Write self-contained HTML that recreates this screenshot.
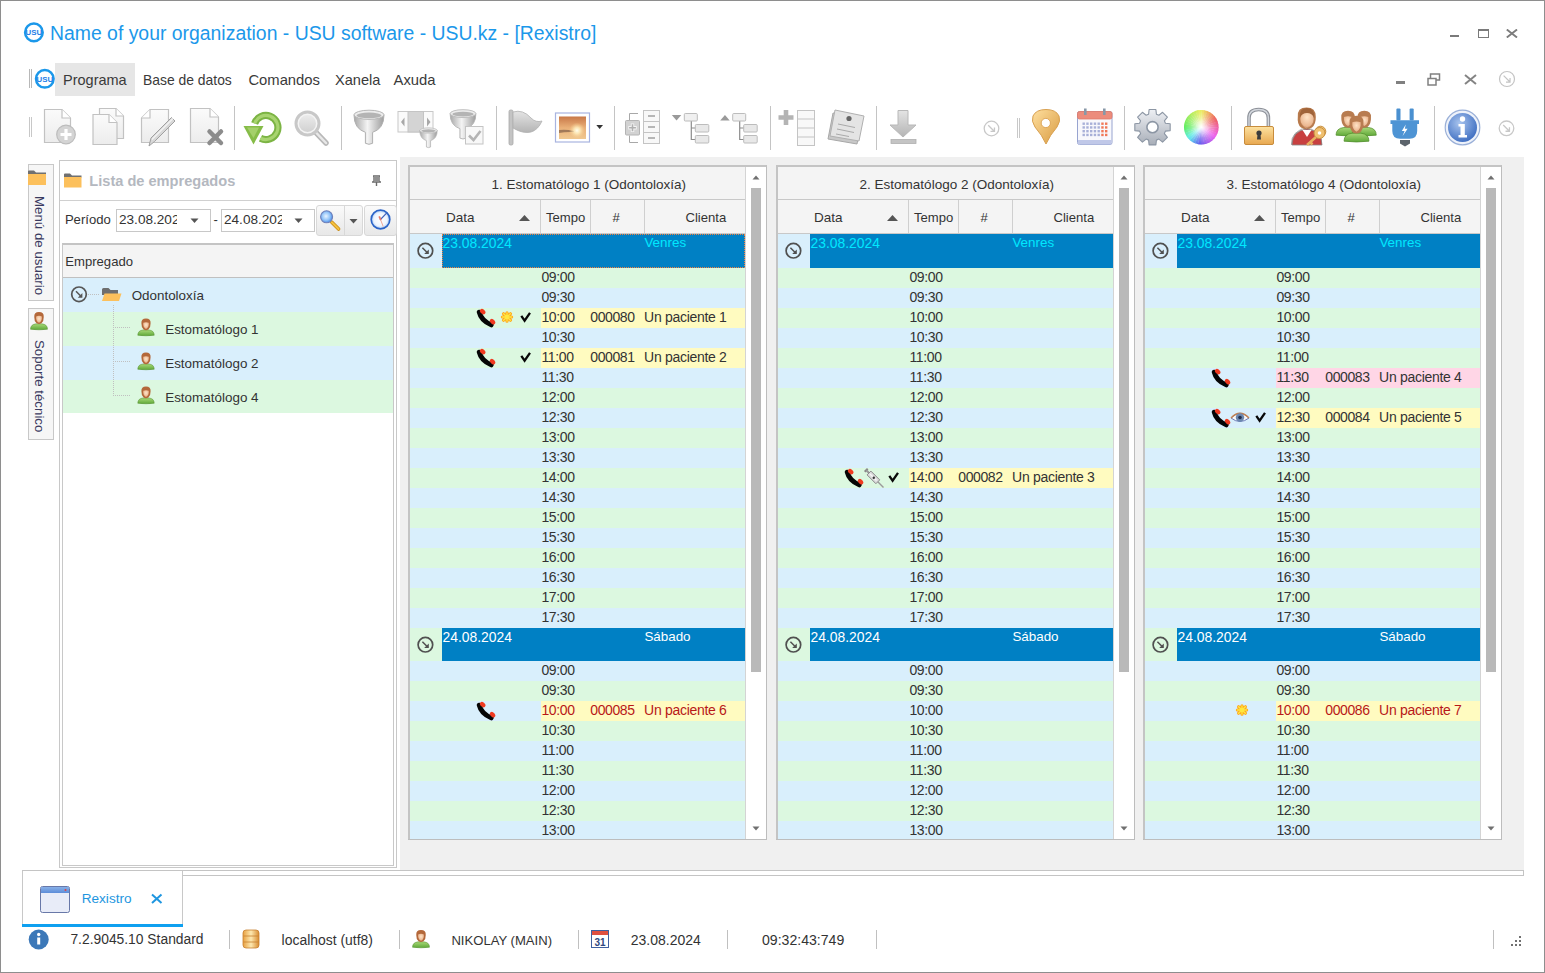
<!DOCTYPE html>
<html><head><meta charset="utf-8"><title>Rexistro</title>
<style>
html,body{margin:0;padding:0;width:1545px;height:973px;overflow:hidden;background:#fff}
body{position:relative;font-family:"Liberation Sans", sans-serif;}
svg text{font-family:"Liberation Sans",sans-serif}
</style></head><body>
<div style="position:absolute;left:0;top:0;width:1545px;height:973px;background:#fff"></div><svg style="position:absolute;left:22px;top:20px;" width="24" height="24" viewBox="0 0 24 24"><circle cx="11.9" cy="12.4" r="8.8" fill="#fff" stroke="#1b98ea" stroke-width="2.5"/><text x="3.5999999999999996" y="15.100000000000001" font-family="Liberation Sans" font-weight="bold" font-size="7.6" fill="#1e7ee8" textLength="16.6" lengthAdjust="spacingAndGlyphs">USU</text></svg><div style="position:absolute;left:50px;top:21.82px;font-size:19.4px;line-height:22.31px;color:#1b98ea;white-space:nowrap;">Name of your organization - USU software - USU.kz - [Rexistro]</div><div style="position:absolute;left:1450px;top:35px;width:9px;height:2px;background:#7a7a7a"></div><div style="position:absolute;left:1478px;top:29px;width:9px;height:6px;border:1px solid #7a7a7a;border-top-width:2px"></div><svg style="position:absolute;left:1506px;top:29px;" width="12" height="9" viewBox="0 0 12 9"><path d="M0.8 0.5 L11 8.5 M11 0.5 L0.8 8.5" stroke="#7c7c7c" stroke-width="1.9"/></svg><div style="position:absolute;left:29px;top:69px;width:1px;height:19px;background:#b8b8b8"></div><div style="position:absolute;left:31px;top:69px;width:1px;height:19px;background:#b8b8b8"></div><svg style="position:absolute;left:34px;top:68px;" width="22" height="22" viewBox="0 0 22 22"><circle cx="10.8" cy="10.8" r="8.8" fill="#fff" stroke="#1b98ea" stroke-width="2.5"/><text x="2.5" y="13.5" font-family="Liberation Sans" font-weight="bold" font-size="7.6" fill="#1e7ee8" textLength="16.6" lengthAdjust="spacingAndGlyphs">USU</text></svg><div style="position:absolute;left:55px;top:63px;width:80px;height:33px;background:#e6e6e6"></div><div style="position:absolute;left:63px;top:71.84px;font-size:14.5px;line-height:16.675px;color:#3a3a3a;white-space:nowrap;">Programa</div><div style="position:absolute;left:143px;top:72.39px;font-size:13.9px;line-height:15.985px;color:#3a3a3a;white-space:nowrap;">Base de datos</div><div style="position:absolute;left:248.4px;top:71.56px;font-size:14.8px;line-height:17.02px;color:#3a3a3a;white-space:nowrap;">Comandos</div><div style="position:absolute;left:335px;top:71.75px;font-size:14.6px;line-height:16.79px;color:#3a3a3a;white-space:nowrap;">Xanela</div><div style="position:absolute;left:393.6px;top:71.56px;font-size:14.8px;line-height:17.02px;color:#3a3a3a;white-space:nowrap;">Axuda</div><div style="position:absolute;left:1396px;top:81px;width:9px;height:3px;background:#808080"></div><svg style="position:absolute;left:1427px;top:73px;" width="14" height="13" viewBox="0 0 14 13"><rect x="3.5" y="1" width="9" height="6" fill="none" stroke="#808080" stroke-width="1.5"/><rect x="1" y="5.5" width="8" height="6.5" fill="#fff" stroke="#808080" stroke-width="1.5"/></svg><svg style="position:absolute;left:1464px;top:74px;" width="13" height="11" viewBox="0 0 13 11"><path d="M1 1 L12 10 M12 1 L1 10" stroke="#848484" stroke-width="2"/></svg><svg style="position:absolute;left:1497px;top:70px;" width="20" height="20" viewBox="0 0 20 20"><circle cx="10" cy="9" r="7.5" fill="none" stroke="#c4c4c4" stroke-width="1.2"/><path d="M6.625 5.625 L13.0375 12.0375 M13.0375 7.9875 L13.0375 12.0375 L8.9875 12.0375" fill="none" stroke="#c4c4c4" stroke-width="1.2"/></svg><svg width="0" height="0" style="position:absolute"><defs>
<linearGradient id="gdoc" x1="0" y1="0" x2="0" y2="1"><stop offset="0" stop-color="#fbfbfb"/><stop offset="1" stop-color="#ececec"/></linearGradient>
<linearGradient id="ggray" x1="0" y1="0" x2="0" y2="1"><stop offset="0" stop-color="#e4e4e4"/><stop offset="1" stop-color="#b4b4b4"/></linearGradient>
<linearGradient id="gfun" x1="0" y1="0" x2="1" y2="0"><stop offset="0" stop-color="#a8a8a8"/><stop offset="0.45" stop-color="#f4f4f4"/><stop offset="1" stop-color="#9c9c9c"/></linearGradient>
<linearGradient id="ggreen" x1="0" y1="0" x2="0" y2="1"><stop offset="0" stop-color="#b6da7a"/><stop offset="1" stop-color="#7cb23e"/></linearGradient>
<radialGradient id="gsun" cx="0.6" cy="0.65" r="0.6"><stop offset="0" stop-color="#fffbe0"/><stop offset="0.25" stop-color="#f8d488"/><stop offset="1" stop-color="#c87838"/></radialGradient>
<linearGradient id="gpin" x1="0" y1="0" x2="1" y2="1"><stop offset="0" stop-color="#ffe0a0"/><stop offset="1" stop-color="#d89a40"/></linearGradient>
<linearGradient id="ggear" x1="0" y1="0" x2="0" y2="1"><stop offset="0" stop-color="#eef0f4"/><stop offset="1" stop-color="#a8aeb8"/></linearGradient>
<linearGradient id="glock" x1="0" y1="0" x2="0" y2="1"><stop offset="0" stop-color="#fde2a0"/><stop offset="1" stop-color="#e8a850"/></linearGradient>
<radialGradient id="ginfo" cx="0.4" cy="0.35" r="0.7"><stop offset="0" stop-color="#a8c4ee"/><stop offset="1" stop-color="#3c6cc0"/></radialGradient>
<linearGradient id="gplug" x1="0" y1="0" x2="0" y2="1"><stop offset="0" stop-color="#68aee8"/><stop offset="1" stop-color="#3d86c8"/></linearGradient>
<radialGradient id="gface" cx="0.5" cy="0.4" r="0.6"><stop offset="0" stop-color="#ffe4c8"/><stop offset="1" stop-color="#e8b088"/></radialGradient>
<linearGradient id="gbody" x1="0" y1="0" x2="0" y2="1"><stop offset="0" stop-color="#a8d878"/><stop offset="1" stop-color="#5ea838"/></linearGradient>
<linearGradient id="gdb" x1="0" y1="0" x2="1" y2="0"><stop offset="0" stop-color="#e8a040"/><stop offset="0.5" stop-color="#fde8b0"/><stop offset="1" stop-color="#d88c30"/></linearGradient>
<linearGradient id="gwin" x1="0" y1="0" x2="0" y2="1"><stop offset="0" stop-color="#88b0e8"/><stop offset="1" stop-color="#5c8cd8"/></linearGradient>
<linearGradient id="gstar" x1="0" y1="0" x2="0" y2="1"><stop offset="0" stop-color="#ffe060"/><stop offset="1" stop-color="#f8b020"/></linearGradient>
</defs></svg><div style="position:absolute;left:29px;top:117px;width:1px;height:20px;background:#c8c8c8"></div><div style="position:absolute;left:31px;top:117px;width:1px;height:20px;background:#c8c8c8"></div><svg style="position:absolute;left:40px;top:104px;overflow:visible;" width="40" height="44" viewBox="40 104 40 44"><path d="M44.5 109.5 H62 L70.5 118 V142.5 H44.5 Z" fill="url(#gdoc)" stroke="#c2c2c2" stroke-width="1.2"/><path d="M62 109.5 V118 H70.5" fill="#fff" stroke="#c2c2c2" stroke-width="1.2"/><circle cx="66" cy="134.5" r="9.3" fill="#d4d4d4" stroke="#bcbcbc" stroke-width="1.2"/><path d="M66 129 V140 M60.5 134.5 H71.5" stroke="#fff" stroke-width="3.2"/></svg><svg style="position:absolute;left:88px;top:104px;overflow:visible;" width="40" height="44" viewBox="88 104 40 44"><path d="M99.5 108.5 H116 L123.5 116 V138.5 H99.5 Z" fill="url(#gdoc)" stroke="#c2c2c2" stroke-width="1.2"/><path d="M116 108.5 V116 H123.5" fill="#fff" stroke="#c2c2c2" stroke-width="1.2"/><path d="M93 114.5 H109 L117 122.5 V144.5 H93 Z" fill="url(#gdoc)" stroke="#c2c2c2" stroke-width="1.2"/><path d="M109 114.5 V122.5 H117" fill="#fff" stroke="#c2c2c2" stroke-width="1.2"/></svg><svg style="position:absolute;left:136px;top:104px;overflow:visible;" width="44" height="46" viewBox="136 104 44 46"><path d="M150 109.5 H168.5 V142.5 H141.5 V118 Z" fill="url(#gdoc)" stroke="#c2c2c2" stroke-width="1.2"/><path d="M150 109.5 V118 H141.5" fill="#fff" stroke="#c2c2c2" stroke-width="1.2"/><path d="M149 146 L151 138 L171.5 117.5 L175 121 L154.5 141.5 Z" fill="#d8d8d8" stroke="#a0a0a0" stroke-width="1"/><path d="M152 139.5 L173 118.5" stroke="#f4f4f4" stroke-width="1.2"/></svg><svg style="position:absolute;left:185px;top:104px;overflow:visible;" width="40" height="46" viewBox="185 104 40 46"><path d="M190.5 108.5 H210 L218.5 117 V142.5 H190.5 Z" fill="url(#gdoc)" stroke="#c2c2c2" stroke-width="1.2"/><path d="M210 108.5 V117 H218.5" fill="#fff" stroke="#c2c2c2" stroke-width="1.2"/><path d="M209.5 131.5 L221 143 M221 131.5 L209.5 143" stroke="#8c8c8c" stroke-width="4.5" stroke-linecap="round"/></svg><div style="position:absolute;left:234px;top:106px;width:1px;height:44px;background:#c4c4c4"></div><div style="position:absolute;left:341px;top:106px;width:1px;height:44px;background:#c4c4c4"></div><div style="position:absolute;left:496px;top:106px;width:1px;height:44px;background:#c4c4c4"></div><div style="position:absolute;left:614px;top:106px;width:1px;height:44px;background:#c4c4c4"></div><div style="position:absolute;left:770px;top:106px;width:1px;height:44px;background:#c4c4c4"></div><div style="position:absolute;left:876px;top:106px;width:1px;height:44px;background:#c4c4c4"></div><div style="position:absolute;left:1124px;top:106px;width:1px;height:44px;background:#c4c4c4"></div><div style="position:absolute;left:1231px;top:106px;width:1px;height:44px;background:#c4c4c4"></div><div style="position:absolute;left:1434px;top:106px;width:1px;height:44px;background:#c4c4c4"></div><svg style="position:absolute;left:240px;top:106px;overflow:visible;" width="46" height="42" viewBox="240 106 46 42"><path d="M254.6 123.5 A12 12 0 1 1 260.5 138.2" fill="none" stroke="#7cb444" stroke-width="7.2"/><path d="M254.6 123.5 A12 12 0 1 1 260.5 138.2" fill="none" stroke="#a8d470" stroke-width="3.2"/><path d="M243.5 126 H263.5 L253.5 144.5 Z" fill="#86bc48"/><path d="M247 127.5 H259 L253.5 138 Z" fill="#a4d06a"/></svg><svg style="position:absolute;left:290px;top:106px;overflow:visible;" width="44" height="44" viewBox="290 106 44 44"><path d="M315.5 132 L326 143" stroke="#b8b8b8" stroke-width="5.5" stroke-linecap="round"/><path d="M315.5 132 L326 143" stroke="#e8e8e8" stroke-width="2.5" stroke-linecap="round"/><circle cx="307.5" cy="123.5" r="11.5" fill="#f4f4f4" stroke="#c8c8c8" stroke-width="3"/><circle cx="307.5" cy="123.5" r="8.5" fill="url(#ggray)" opacity="0.55"/></svg><svg style="position:absolute;left:350px;top:106px;overflow:visible;" width="40" height="44" viewBox="350 106 40 44"><path d="M354.0 114.8 Q354.0 128.8 365.4 132.3 V143.3 Q369 145.3 372.6 143.3 V132.3 Q384.0 128.8 384.0 114.8 Z" fill="url(#gfun)" stroke="#b0b0b0" stroke-width="1.0"/><ellipse cx="369" cy="114.8" rx="15.0" ry="4.6" fill="#ececec" stroke="#b8b8b8" stroke-width="1.0"/><ellipse cx="369" cy="115.39999999999999" rx="12.4" ry="2.8" fill="#b4b4b4"/></svg><svg style="position:absolute;left:394px;top:106px;overflow:visible;" width="48" height="44" viewBox="394 106 48 44"><rect x="398" y="111.5" width="35" height="20.5" fill="#fafafa" stroke="#c8c8c8"/><rect x="408" y="111.5" width="15.5" height="20.5" fill="#d4d4d4" stroke="#c4c4c4"/><path d="M404.5 117.5 L401 122 L404.5 126.5 Z M427 117.5 L430.5 122 L427 126.5 Z" fill="#a8a8a8"/><path d="M419.8 130.5 Q419.8 138.62 426.412 140.65 V147.03 Q428.5 148.19 430.588 147.03 V140.65 Q437.2 138.62 437.2 130.5 Z" fill="url(#gfun)" stroke="#b0b0b0" stroke-width="0.7"/><ellipse cx="428.5" cy="130.5" rx="8.7" ry="2.6679999999999997" fill="#ececec" stroke="#b8b8b8" stroke-width="0.7"/><ellipse cx="428.5" cy="130.84799999999998" rx="7.191999999999999" ry="1.6239999999999999" fill="#b4b4b4"/></svg><svg style="position:absolute;left:445px;top:106px;overflow:visible;" width="46" height="44" viewBox="445 106 46 44"><path d="M450.1 113.6 Q450.1 125.64 459.904 128.65 V138.10999999999999 Q463 139.82999999999998 466.096 138.10999999999999 V128.65 Q475.9 125.64 475.9 113.6 Z" fill="url(#gfun)" stroke="#b0b0b0" stroke-width="0.86"/><ellipse cx="463" cy="113.6" rx="12.9" ry="3.9559999999999995" fill="#ececec" stroke="#b8b8b8" stroke-width="0.86"/><ellipse cx="463" cy="114.116" rx="10.664" ry="2.408" fill="#b4b4b4"/><rect x="465.5" y="126.5" width="17.5" height="17.5" fill="#f8f8f8" stroke="#c4c4c4"/><path d="M469 135.5 L473.5 140 L480.5 131" fill="none" stroke="#b4b4b4" stroke-width="2.6"/></svg><svg style="position:absolute;left:504px;top:106px;overflow:visible;" width="44" height="44" viewBox="504 106 44 44"><rect x="509" y="110" width="4" height="35" rx="1.5" fill="#c4c4c4" stroke="#a8a8a8" stroke-width="0.8"/><path d="M513 112 Q523 109 531 118 Q536 123 542 121 Q538 130 531 132 Q523 134 513 128 Z" fill="url(#ggray)" stroke="#b0b0b0" stroke-width="0.8"/></svg><svg style="position:absolute;left:552px;top:108px;overflow:visible;" width="52" height="38" viewBox="552 108 52 38"><linearGradient id="gsky" x1="0" y1="0" x2="0" y2="1"><stop offset="0" stop-color="#c87848"/><stop offset="0.5" stop-color="#eab078"/><stop offset="1" stop-color="#f0c890"/></linearGradient><radialGradient id="gsun2" cx="0.5" cy="0.5" r="0.5"><stop offset="0" stop-color="#fffff0" stop-opacity="1"/><stop offset="0.4" stop-color="#fff0c0" stop-opacity="0.8"/><stop offset="1" stop-color="#f8d090" stop-opacity="0"/></radialGradient><rect x="555.5" y="113" width="34" height="29" fill="#fff" stroke="#a8b4e0" stroke-width="1.2"/><rect x="559" y="116.5" width="27" height="22.5" fill="url(#gsky)"/><path d="M559 130 Q566 129 574 131 L574 132 Q566 131.5 559 133 Z" fill="#705040" opacity="0.6"/><circle cx="577" cy="130.5" r="8" fill="url(#gsun2)"/><path d="M596.3 125 H603 L599.65 129 Z" fill="#333"/></svg><svg style="position:absolute;left:620px;top:106px;overflow:visible;" width="44" height="44" viewBox="620 106 44 44"><path d="M638 113.5 H629.5 V120 M629.5 135.5 V142.5 H638" fill="none" stroke="#a8a8a8" stroke-width="1"/><rect x="625.5" y="120.5" width="14" height="14.5" rx="1" fill="#d2d2d2" stroke="#b4b4b4"/><path d="M632.5 123.5 V132 M628.3 127.75 H636.7" stroke="#f4f4f4" stroke-width="3.4"/><path d="M632.5 124.3 V131.2 M629.1 127.75 H635.9" stroke="#b0b0b0" stroke-width="1.6"/><rect x="643.5" y="110.5" width="16" height="11" fill="#f8f8f8" stroke="#c4c4c4"/><rect x="643.5" y="121.5" width="16" height="11" fill="#f8f8f8" stroke="#c4c4c4"/><rect x="643.5" y="132.5" width="16" height="11" fill="#f8f8f8" stroke="#c4c4c4"/><path d="M648 116 H655 M648 127 H655 M648 138 H655" stroke="#a0a0a0" stroke-width="1.6"/></svg><svg style="position:absolute;left:668px;top:106px;overflow:visible;" width="44" height="44" viewBox="668 106 44 44"><path d="M671.8 115 H681.3 L676.55 120.5 Z" fill="#9a9a9a"/><path d="M691.3 120.5 V139.5 H695.8 M691.3 128 H695.8" fill="none" stroke="#8c8c8c" stroke-width="1.2"/><rect x="684.3" y="113.5" width="13" height="7.5" rx="1" fill="#f0f0f0" stroke="#bcbcbc"/><rect x="695.3" y="124.5" width="13.5" height="7.5" rx="1" fill="#e8e8e8" stroke="#bcbcbc"/><rect x="695.3" y="135.5" width="13.5" height="7.5" rx="1" fill="#e8e8e8" stroke="#bcbcbc"/></svg><svg style="position:absolute;left:717px;top:106px;overflow:visible;" width="44" height="44" viewBox="717 106 44 44"><path d="M720.2 120.5 L724.95 115 L729.7 120.5 Z" fill="#9a9a9a"/><path d="M739.7 120.5 V139.5 H744.2 M739.7 128 H744.2" fill="none" stroke="#8c8c8c" stroke-width="1.2"/><rect x="732.7" y="113.5" width="13" height="7.5" rx="1" fill="#f0f0f0" stroke="#bcbcbc"/><rect x="743.7" y="124.5" width="13.5" height="7.5" rx="1" fill="#e8e8e8" stroke="#bcbcbc"/><rect x="743.7" y="135.5" width="13.5" height="7.5" rx="1" fill="#e8e8e8" stroke="#bcbcbc"/></svg><svg style="position:absolute;left:774px;top:106px;overflow:visible;" width="44" height="44" viewBox="774 106 44 44"><path d="M786 110 V125 M778.5 117.5 H793.5" stroke="#b4b4b4" stroke-width="4.6"/><rect x="797.5" y="110.5" width="17" height="35" fill="#f8f8f8" stroke="#c4c4c4"/><path d="M798 119 H814 M798 128 H814 M798 137 H814" stroke="#c4c4c4" stroke-width="1"/></svg><svg style="position:absolute;left:824px;top:106px;overflow:visible;" width="44" height="44" viewBox="824 106 44 44"><path d="M833 113 L862 118 L857 144 L828 139 Z" fill="#c8c8c8" stroke="#a8a8a8" stroke-width="1"/><path d="M835 110 L864 116 L859 141 L830 136 Z" fill="#e4e4e4" stroke="#b0b0b0" stroke-width="1"/><path d="M838 124 L855 127.5 M837 129 L854 132.5 M836 134 L849 136.5" stroke="#aaa" stroke-width="1"/><circle cx="849" cy="118.5" r="2.6" fill="#666"/></svg><svg style="position:absolute;left:886px;top:106px;overflow:visible;" width="36" height="44" viewBox="886 106 36 44"><path d="M898 110.5 H908 V125 H916 L903 137 L890 125 H898 Z" fill="url(#ggray)" stroke="#b8b8b8" stroke-width="1"/><rect x="891" y="139.5" width="25" height="4" fill="#c4c4c4" stroke="#b0b0b0" stroke-width="0.8"/></svg><svg style="position:absolute;left:981px;top:118px;overflow:visible;" width="22" height="22" viewBox="981 118 22 22"><circle cx="991.5" cy="128.5" r="7.3" fill="none" stroke="#c8c8c8" stroke-width="1.3"/><path d="M988.215 125.215 L994.4565 131.4565 M994.4565 127.5145 L994.4565 131.4565 L990.5145 131.4565" fill="none" stroke="#c8c8c8" stroke-width="1.3"/></svg><div style="position:absolute;left:1017px;top:118px;width:1px;height:20px;background:#c8c8c8"></div><div style="position:absolute;left:1019px;top:118px;width:1px;height:20px;background:#c8c8c8"></div><svg style="position:absolute;left:1028px;top:106px;overflow:visible;" width="38" height="44" viewBox="1028 106 38 44"><path d="M1046 144 Q1042 135 1035 127 Q1031 121 1033 116 Q1036 109.5 1046 109.5 Q1056 109.5 1059 116 Q1061 121 1057 127 Q1050 135 1046 144 Z" fill="url(#gpin)" stroke="#d8a050" stroke-width="1"/><circle cx="1045.8" cy="123" r="4.6" fill="#fff" stroke="#d89a48" stroke-width="0.8"/></svg><svg style="position:absolute;left:1074px;top:106px;overflow:visible;" width="42" height="44" viewBox="1074 106 42 44"><rect x="1077.5" y="111.5" width="34.5" height="33" rx="2" fill="#f8f8fc" stroke="#98a4d0" stroke-width="1"/><rect x="1077.5" y="111.5" width="34.5" height="7.5" rx="2" fill="#ec8c7c" stroke="#e07868" stroke-width="0.8"/><rect x="1078" y="140" width="33.5" height="4.5" fill="#c0c8e8"/><rect x="1084" y="108.5" width="2.6" height="6.5" fill="#8898a8"/><rect x="1103" y="108.5" width="2.6" height="6.5" fill="#8898a8"/><rect x="1082.50" y="122.50" width="2.4" height="2.4" fill="#a8b0d8"/><rect x="1086.25" y="122.50" width="2.4" height="2.4" fill="#a8b0d8"/><rect x="1090.00" y="122.50" width="2.4" height="2.4" fill="#a8b0d8"/><rect x="1093.75" y="122.50" width="2.4" height="2.4" fill="#a8b0d8"/><rect x="1097.50" y="122.50" width="2.4" height="2.4" fill="#a8b0d8"/><rect x="1101.25" y="122.50" width="2.4" height="2.4" fill="#f07858"/><rect x="1105.00" y="122.50" width="2.4" height="2.4" fill="#f07858"/><rect x="1082.50" y="126.25" width="2.4" height="2.4" fill="#a8b0d8"/><rect x="1086.25" y="126.25" width="2.4" height="2.4" fill="#a8b0d8"/><rect x="1090.00" y="126.25" width="2.4" height="2.4" fill="#a8b0d8"/><rect x="1093.75" y="126.25" width="2.4" height="2.4" fill="#a8b0d8"/><rect x="1097.50" y="126.25" width="2.4" height="2.4" fill="#a8b0d8"/><rect x="1101.25" y="126.25" width="2.4" height="2.4" fill="#f07858"/><rect x="1105.00" y="126.25" width="2.4" height="2.4" fill="#f07858"/><rect x="1082.50" y="130.00" width="2.4" height="2.4" fill="#a8b0d8"/><rect x="1086.25" y="130.00" width="2.4" height="2.4" fill="#a8b0d8"/><rect x="1090.00" y="130.00" width="2.4" height="2.4" fill="#a8b0d8"/><rect x="1093.75" y="130.00" width="2.4" height="2.4" fill="#a8b0d8"/><rect x="1097.50" y="130.00" width="2.4" height="2.4" fill="#a8b0d8"/><rect x="1101.25" y="130.00" width="2.4" height="2.4" fill="#f07858"/><rect x="1105.00" y="130.00" width="2.4" height="2.4" fill="#f07858"/><rect x="1082.50" y="133.75" width="2.4" height="2.4" fill="#a8b0d8"/><rect x="1086.25" y="133.75" width="2.4" height="2.4" fill="#a8b0d8"/><rect x="1090.00" y="133.75" width="2.4" height="2.4" fill="#a8b0d8"/><rect x="1093.75" y="133.75" width="2.4" height="2.4" fill="#a8b0d8"/><rect x="1097.50" y="133.75" width="2.4" height="2.4" fill="#a8b0d8"/><rect x="1101.25" y="133.75" width="2.4" height="2.4" fill="#f07858"/><rect x="1105.00" y="133.75" width="2.4" height="2.4" fill="#f07858"/></svg><svg style="position:absolute;left:1128px;top:104px;overflow:visible;" width="48" height="48" viewBox="1128 104 48 48"><path d="M1165.42 123.29 L1170.18 123.80 L1170.18 130.60 L1165.42 131.11 L1164.40 133.57 L1167.40 137.29 L1162.59 142.10 L1158.87 139.10 L1156.41 140.12 L1155.90 144.88 L1149.10 144.88 L1148.59 140.12 L1146.13 139.10 L1142.41 142.10 L1137.60 137.29 L1140.60 133.57 L1139.58 131.11 L1134.82 130.60 L1134.82 123.80 L1139.58 123.29 L1140.60 120.83 L1137.60 117.11 L1142.41 112.30 L1146.13 115.30 L1148.59 114.28 L1149.10 109.52 L1155.90 109.52 L1156.41 114.28 L1158.87 115.30 L1162.59 112.30 L1167.40 117.11 L1164.40 120.83 Z" fill="url(#ggear)" stroke="#8c96a4" stroke-width="1.1" stroke-linejoin="round"/><circle cx="1152.5" cy="127.2" r="5.6" fill="#fff" stroke="#8c96a4" stroke-width="1.6"/></svg><svg style="position:absolute;left:1180px;top:106px;overflow:visible;" width="44" height="44" viewBox="1180 106 44 44"><path d="M1201.3 127.2 L1201.30 109.90 A17.3 17.3 0 0 1 1204.75 110.25 Z" fill="hsl(55,80%,64%)"/><path d="M1201.3 127.2 L1204.30 110.16 A17.3 17.3 0 0 1 1207.64 111.10 Z" fill="hsl(45,80%,64%)"/><path d="M1201.3 127.2 L1207.22 110.94 A17.3 17.3 0 0 1 1210.34 112.45 Z" fill="hsl(35,80%,64%)"/><path d="M1201.3 127.2 L1209.95 112.22 A17.3 17.3 0 0 1 1212.76 114.24 Z" fill="hsl(25,80%,64%)"/><path d="M1201.3 127.2 L1212.42 113.95 A17.3 17.3 0 0 1 1214.84 116.43 Z" fill="hsl(15,80%,64%)"/><path d="M1201.3 127.2 L1214.55 116.08 A17.3 17.3 0 0 1 1216.50 118.95 Z" fill="hsl(5,80%,64%)"/><path d="M1201.3 127.2 L1216.28 118.55 A17.3 17.3 0 0 1 1217.71 121.71 Z" fill="hsl(355,80%,64%)"/><path d="M1201.3 127.2 L1217.56 121.28 A17.3 17.3 0 0 1 1218.41 124.64 Z" fill="hsl(345,80%,64%)"/><path d="M1201.3 127.2 L1218.34 124.20 A17.3 17.3 0 0 1 1218.59 127.65 Z" fill="hsl(335,80%,64%)"/><path d="M1201.3 127.2 L1218.60 127.20 A17.3 17.3 0 0 1 1218.25 130.65 Z" fill="hsl(326,80%,64%)"/><path d="M1201.3 127.2 L1218.34 130.20 A17.3 17.3 0 0 1 1217.40 133.54 Z" fill="hsl(317,80%,64%)"/><path d="M1201.3 127.2 L1217.56 133.12 A17.3 17.3 0 0 1 1216.05 136.24 Z" fill="hsl(308,80%,64%)"/><path d="M1201.3 127.2 L1216.28 135.85 A17.3 17.3 0 0 1 1214.26 138.66 Z" fill="hsl(299,80%,64%)"/><path d="M1201.3 127.2 L1214.55 138.32 A17.3 17.3 0 0 1 1212.07 140.74 Z" fill="hsl(290,80%,64%)"/><path d="M1201.3 127.2 L1212.42 140.45 A17.3 17.3 0 0 1 1209.55 142.40 Z" fill="hsl(281,80%,64%)"/><path d="M1201.3 127.2 L1209.95 142.18 A17.3 17.3 0 0 1 1206.79 143.61 Z" fill="hsl(272,80%,64%)"/><path d="M1201.3 127.2 L1207.22 143.46 A17.3 17.3 0 0 1 1203.86 144.31 Z" fill="hsl(263,80%,64%)"/><path d="M1201.3 127.2 L1204.30 144.24 A17.3 17.3 0 0 1 1200.85 144.49 Z" fill="hsl(254,80%,64%)"/><path d="M1201.3 127.2 L1201.30 144.50 A17.3 17.3 0 0 1 1197.85 144.15 Z" fill="hsl(243,80%,64%)"/><path d="M1201.3 127.2 L1198.30 144.24 A17.3 17.3 0 0 1 1194.96 143.30 Z" fill="hsl(228,80%,64%)"/><path d="M1201.3 127.2 L1195.38 143.46 A17.3 17.3 0 0 1 1192.26 141.95 Z" fill="hsl(214,80%,64%)"/><path d="M1201.3 127.2 L1192.65 142.18 A17.3 17.3 0 0 1 1189.84 140.16 Z" fill="hsl(199,80%,64%)"/><path d="M1201.3 127.2 L1190.18 140.45 A17.3 17.3 0 0 1 1187.76 137.97 Z" fill="hsl(185,80%,64%)"/><path d="M1201.3 127.2 L1188.05 138.32 A17.3 17.3 0 0 1 1186.10 135.45 Z" fill="hsl(171,80%,64%)"/><path d="M1201.3 127.2 L1186.32 135.85 A17.3 17.3 0 0 1 1184.89 132.69 Z" fill="hsl(156,80%,64%)"/><path d="M1201.3 127.2 L1185.04 133.12 A17.3 17.3 0 0 1 1184.19 129.76 Z" fill="hsl(142,80%,64%)"/><path d="M1201.3 127.2 L1184.26 130.20 A17.3 17.3 0 0 1 1184.01 126.75 Z" fill="hsl(127,80%,64%)"/><path d="M1201.3 127.2 L1184.00 127.20 A17.3 17.3 0 0 1 1184.35 123.75 Z" fill="hsl(117,80%,64%)"/><path d="M1201.3 127.2 L1184.26 124.20 A17.3 17.3 0 0 1 1185.20 120.86 Z" fill="hsl(110,80%,64%)"/><path d="M1201.3 127.2 L1185.04 121.28 A17.3 17.3 0 0 1 1186.55 118.16 Z" fill="hsl(103,80%,64%)"/><path d="M1201.3 127.2 L1186.32 118.55 A17.3 17.3 0 0 1 1188.34 115.74 Z" fill="hsl(97,80%,64%)"/><path d="M1201.3 127.2 L1188.05 116.08 A17.3 17.3 0 0 1 1190.53 113.66 Z" fill="hsl(90,80%,64%)"/><path d="M1201.3 127.2 L1190.18 113.95 A17.3 17.3 0 0 1 1193.05 112.00 Z" fill="hsl(83,80%,64%)"/><path d="M1201.3 127.2 L1192.65 112.22 A17.3 17.3 0 0 1 1195.81 110.79 Z" fill="hsl(77,80%,64%)"/><path d="M1201.3 127.2 L1195.38 110.94 A17.3 17.3 0 0 1 1198.74 110.09 Z" fill="hsl(70,80%,64%)"/><path d="M1201.3 127.2 L1198.30 110.16 A17.3 17.3 0 0 1 1201.75 109.91 Z" fill="hsl(63,80%,64%)"/><radialGradient id="gcw" cx="0.5" cy="0.5" r="0.5"><stop offset="0" stop-color="#fff" stop-opacity="1"/><stop offset="0.6" stop-color="#fff" stop-opacity="0.3"/><stop offset="1" stop-color="#fff" stop-opacity="0"/></radialGradient><circle cx="1201.3" cy="127.2" r="17.3" fill="url(#gcw)"/></svg><svg style="position:absolute;left:1240px;top:104px;overflow:visible;" width="38" height="46" viewBox="1240 104 38 46"><path d="M1249 127 V118 Q1249 109.5 1258.7 109.5 Q1268.4 109.5 1268.4 118 V127" fill="none" stroke="#8c9098" stroke-width="3.6"/><path d="M1249 127 V118 Q1249 109.5 1258.7 109.5 Q1268.4 109.5 1268.4 118 V127" fill="none" stroke="#d4d8de" stroke-width="1.4"/><rect x="1244.5" y="126.5" width="29" height="18" rx="1.5" fill="url(#glock)" stroke="#c88c3c" stroke-width="1"/><circle cx="1259" cy="133" r="2.6" fill="#3c3c3c"/><path d="M1257.6 134 H1260.4 L1261 139.5 H1257 Z" fill="#3c3c3c"/></svg><svg style="position:absolute;left:1286px;top:104px;overflow:visible;" width="44" height="46" viewBox="1286 104 44 46"><path d="M1291.5 144.5 Q1291 131 1306.5 128 Q1322 131 1321.5 144.5 Z" fill="#f0f0f0" stroke="#909090" stroke-width="0.8"/><path d="M1296 144.5 Q1296 132 1306.5 129.5 Q1317 132 1317 144.5 Z" fill="#c84444"/><path d="M1301 129 L1306.5 137 L1312 129 Z" fill="#fff" stroke="#b0b0b0" stroke-width="0.6"/><path d="M1297.8 117 Q1297 107.6 1306.5 107.6 Q1316 107.6 1315.8 117 Q1316 124 1312 127.5 Q1306.5 131 1301 127.5 Q1297 124 1297.8 117 Z" fill="#b87a4c"/><path d="M1300.5 117.5 Q1306.5 113 1312.5 117.5 Q1313 125 1306.5 128.5 Q1300 125 1300.5 117.5 Z" fill="url(#gface)"/><circle cx="1320.5" cy="131.5" r="5.3" fill="#f0c070" stroke="#c89040" stroke-width="1"/><circle cx="1320.5" cy="131.5" r="1.7" fill="#e0a050"/><path d="M1317.5 135.5 L1308.5 144.5 M1311.5 141.5 L1313.8 143.8" stroke="#e8b060" stroke-width="2.8"/></svg><svg style="position:absolute;left:1286px;top:104px;overflow:visible;" width="44" height="46" viewBox="1286 104 44 46"><path d="M1292 145 Q1292 131 1307 129 Q1322 131 1322 145 Z" fill="#c84040" stroke="#888" stroke-width="0.8"/><path d="M1302.5 130 L1307 137 L1311.5 130 Z" fill="#fff"/><ellipse cx="1307" cy="119" rx="7" ry="8.5" fill="url(#gface)" stroke="#b87a50" stroke-width="0.6"/><path d="M1299.8 118 Q1299 108 1307 108 Q1315 108 1314.2 118 Q1312 113 1307 113 Q1302 113 1299.8 118 Z" fill="#a0643a"/><circle cx="1319.5" cy="133" r="5.5" fill="#f0c070" stroke="#c89040" stroke-width="1"/><circle cx="1319.5" cy="133" r="1.8" fill="#fff"/><path d="M1316 137 L1307 145 M1310 142 L1312.5 144.5" stroke="#e8b060" stroke-width="2.6"/></svg><svg style="position:absolute;left:1333px;top:104px;overflow:visible;" width="46" height="46" viewBox="1333 104 46 46"><path d="M1336.0288 135.16 Q1336.0288 128.3392 1343.824 127.50399999999999 H1352.176 Q1359.9712 128.3392 1359.9712 135.16 Q1348 136.6912 1336.0288 135.16 Z" fill="url(#gbody)" stroke="#4e8a28" stroke-width="0.696"/><path d="M1341.3184 117.75999999999999 Q1340.7616 110.8 1348 110.8 Q1355.2384 110.8 1354.6816 117.75999999999999 Q1354.96 123.328 1351.48 126.80799999999999 Q1348 128.61759999999998 1344.52 126.80799999999999 Q1341.04 123.328 1341.3184 117.75999999999999 Z" fill="#b87c50"/><path d="M1343.9632 117.064 Q1348 115.2544 1352.0368 117.064 Q1352.4544 124.024 1348 126.112 Q1343.5456 124.024 1343.9632 117.064 Z" fill="url(#gface)"/><path d="M1352.3288 135.16 Q1352.3288 128.3392 1360.124 127.50399999999999 H1368.4759999999999 Q1376.2712 128.3392 1376.2712 135.16 Q1364.3 136.6912 1352.3288 135.16 Z" fill="url(#gbody)" stroke="#4e8a28" stroke-width="0.696"/><path d="M1357.6184 117.75999999999999 Q1357.0616 110.8 1364.3 110.8 Q1371.5384 110.8 1370.9815999999998 117.75999999999999 Q1371.26 123.328 1367.78 126.80799999999999 Q1364.3 128.61759999999998 1360.82 126.80799999999999 Q1357.34 123.328 1357.6184 117.75999999999999 Z" fill="#b87c50"/><path d="M1360.2631999999999 117.064 Q1364.3 115.2544 1368.3368 117.064 Q1368.7544 124.024 1364.3 126.112 Q1359.8455999999999 124.024 1360.2631999999999 117.064 Z" fill="url(#gface)"/><path d="M1344.03 141.175 Q1344.03 134.07 1352.15 133.2 H1360.85 Q1368.97 134.07 1368.97 141.175 Q1356.5 142.77 1344.03 141.175 Z" fill="url(#gbody)" stroke="#4e8a28" stroke-width="0.725"/><path d="M1349.54 123.05 Q1348.96 115.8 1356.5 115.8 Q1364.04 115.8 1363.46 123.05 Q1363.75 128.85 1360.125 132.475 Q1356.5 134.35999999999999 1352.875 132.475 Q1349.25 128.85 1349.54 123.05 Z" fill="#b87c50"/><path d="M1352.295 122.325 Q1356.5 120.44 1360.705 122.325 Q1361.14 129.575 1356.5 131.75 Q1351.86 129.575 1352.295 122.325 Z" fill="url(#gface)"/></svg><svg style="position:absolute;left:1388px;top:104px;overflow:visible;" width="34" height="48" viewBox="1388 104 34 48"><rect x="1396.4" y="108.5" width="4.1" height="12" rx="1" fill="#4a90d0"/><rect x="1409.6" y="108.5" width="4.1" height="12" rx="1" fill="#4a90d0"/><path d="M1390.5 120.3 H1419 V124 H1417.2 V131 Q1417.2 138.8 1409.5 138.8 H1400.2 Q1392.3 138.8 1392.3 131 V124 H1390.5 Z" fill="#4e94d4"/><path d="M1405.8 124.5 L1401.8 131 H1404.6 L1402.6 136 L1407.6 128.8 H1404.8 Z" fill="#fff"/><path d="M1400 140 H1410 V143.5 L1405 146.5 L1400 143.5 Z" fill="#5c646c"/></svg><svg style="position:absolute;left:1440px;top:104px;overflow:visible;" width="46" height="46" viewBox="1440 104 46 46"><circle cx="1462.5" cy="127.5" r="17.3" fill="#eef2fa" stroke="#9ab0d8" stroke-width="1.2"/><circle cx="1462.5" cy="127.5" r="14.5" fill="url(#ginfo)"/><circle cx="1462.5" cy="119" r="2.7" fill="#fff"/><path d="M1458.5 124 H1464.8 V135 H1467 V137.5 H1458.5 V135 H1460.5 V126.5 H1458.5 Z" fill="#fff"/></svg><svg style="position:absolute;left:1496px;top:118px;overflow:visible;" width="22" height="22" viewBox="1496 118 22 22"><circle cx="1506.5" cy="128.3" r="7.3" fill="none" stroke="#c8c8c8" stroke-width="1.3"/><path d="M1503.215 125.01500000000001 L1509.4565 131.25650000000002 M1509.4565 127.31450000000001 L1509.4565 131.25650000000002 L1505.5145 131.25650000000002" fill="none" stroke="#c8c8c8" stroke-width="1.3"/></svg><div style="position:absolute;left:28px;top:164px;width:24px;height:135px;border:1px solid #c8c8c8;background:#f6f6f6"></div><svg style="position:absolute;left:27px;top:168px;overflow:visible;" width="22" height="20" viewBox="27 168 22 20"><path d="M28 173.5 V171.5 Q28 170.5 29 170.5 H34 L36 172.5 H46 V174.5 H28 Z" fill="#707070"/><rect x="28" y="174.0" width="18" height="11.0" fill="#fcc05c"/></svg><div style="position:absolute;left:33px;top:196px;width:14px;height:104px;"><div style="position:absolute;left:0;top:0;transform-origin:0 0;transform:translate(13px,0) rotate(90deg);font-size:13.3px;line-height:13px;color:#3a3a60;white-space:nowrap">Menú de usuario</div></div><div style="position:absolute;left:28px;top:308px;width:24px;height:130px;border:1px solid #c8c8c8;background:#f6f6f6"></div><svg style="position:absolute;left:27px;top:310px;overflow:visible;" width="24" height="24" viewBox="27 310 24 24"><path d="M30.520400000000002 329.255 Q30.520400000000002 324.4236 36.042 323.832 H41.958 Q47.4796 324.4236 47.4796 329.255 Q39 330.3396 30.520400000000002 329.255 Z" fill="url(#gbody)" stroke="#4e8a28" stroke-width="0.493"/><path d="M34.2672 316.93 Q33.8728 312 39 312 Q44.1272 312 43.7328 316.93 Q43.93 320.874 41.465 323.339 Q39 324.6208 36.535 323.339 Q34.07 320.874 34.2672 316.93 Z" fill="#b4683a"/><path d="M36.1406 316.437 Q39 315.1552 41.8594 316.437 Q42.1552 321.367 39 322.846 Q35.8448 321.367 36.1406 316.437 Z" fill="url(#gface)"/></svg><div style="position:absolute;left:33px;top:340px;width:14px;height:96px;"><div style="position:absolute;left:0;top:0;transform-origin:0 0;transform:translate(13px,0) rotate(90deg);font-size:13.3px;line-height:13px;color:#3a3a60;white-space:nowrap">Soporte técnico</div></div><div style="position:absolute;left:59px;top:160px;width:336px;height:706px;border:1px solid #c8c8c8;background:#fff"></div><div style="position:absolute;left:60px;top:200px;width:336px;height:1px;background:#d0d0d0"></div><svg style="position:absolute;left:62px;top:170px;overflow:visible;" width="22" height="20" viewBox="62 170 22 20"><path d="M64 176.5 V174.5 Q64 173.5 65 173.5 H70 L72 175.5 H81.5 V177.5 H64 Z" fill="#707070"/><rect x="64" y="177.0" width="17.5" height="10.5" fill="#fcc05c"/></svg><div style="position:absolute;left:89.3px;top:173.05px;font-size:14.6px;line-height:16.79px;color:#b4b8c0;white-space:nowrap;font-weight:bold">Lista de empregados</div><svg style="position:absolute;left:368px;top:172px;overflow:visible;" width="16" height="16" viewBox="368 172 16 16"><path d="M373 176 H380 M374 176 V182 M379 176 V182 M372 182 H381 M376.5 182 V186" stroke="#6a6a6a" stroke-width="1.4" fill="none"/><rect x="374" y="176" width="5" height="6" fill="#909090"/></svg><div style="position:absolute;left:64.9px;top:212.43px;font-size:13.1px;line-height:15.065px;color:#333;white-space:nowrap;">Período</div><div style="position:absolute;left:116px;top:209px;width:95px;height:23px;border:1px solid #c8c8c8;background:#fff;box-sizing:border-box"></div><div style="position:absolute;left:119px;top:212px;width:58px;height:16px;overflow:hidden;font-size:13.6px;line-height:16px;color:#333;white-space:nowrap;letter-spacing:0px">23.08.202</div><svg style="position:absolute;left:189px;top:215px;overflow:visible;" width="12" height="10" viewBox="189 215 12 10"><path d="M190.5 218.5 H198.5 L194.5 223 Z" fill="#555"/></svg><div style="position:absolute;left:221px;top:209px;width:94px;height:23px;border:1px solid #c8c8c8;background:#fff;box-sizing:border-box"></div><div style="position:absolute;left:224px;top:212px;width:58px;height:16px;overflow:hidden;font-size:13.6px;line-height:16px;color:#333;white-space:nowrap;letter-spacing:0px">24.08.202</div><svg style="position:absolute;left:293px;top:215px;overflow:visible;" width="12" height="10" viewBox="293 215 12 10"><path d="M294.5 218.5 H302.5 L298.5 223 Z" fill="#555"/></svg><div style="position:absolute;left:213.5px;top:213.02px;font-size:13px;line-height:14.95px;color:#333;white-space:nowrap;">-</div><div style="position:absolute;left:316px;top:205px;width:47px;height:31px;border:1px solid #d8d8d8;border-radius:3px;background:linear-gradient(#fafafa,#e8e8e8);box-sizing:border-box"></div><div style="position:absolute;left:344px;top:206px;width:1px;height:29px;background:#d8d8d8"></div><svg style="position:absolute;left:318px;top:206px;overflow:visible;" width="26" height="28" viewBox="318 206 26 28"><radialGradient id="gglass" cx="0.45" cy="0.45" r="0.6"><stop offset="0" stop-color="#e8f4ff"/><stop offset="0.6" stop-color="#8cc0f8"/><stop offset="1" stop-color="#3c7ce0"/></radialGradient><path d="M331.8 222.2 L338.6 229" stroke="#c88a10" stroke-width="3.6" stroke-linecap="round"/><path d="M331.8 222.2 L338.6 229" stroke="#f4c040" stroke-width="2" stroke-linecap="round"/><circle cx="326.6" cy="216.8" r="6" fill="url(#gglass)" stroke="#7080b8" stroke-width="1.1"/></svg><svg style="position:absolute;left:346px;top:214px;overflow:visible;" width="14" height="12" viewBox="346 214 14 12"><path d="M349.5 219 H357.5 L353.5 223.5 Z" fill="#555"/></svg><div style="position:absolute;left:364px;top:205px;width:33px;height:31px;border:1px solid #d8d8d8;border-radius:3px;background:linear-gradient(#fafafa,#e8e8e8);box-sizing:border-box"></div><svg style="position:absolute;left:366px;top:207px;overflow:visible;" width="28" height="28" viewBox="366 207 28 28"><radialGradient id="gclock" cx="0.5" cy="0.5" r="0.5"><stop offset="0" stop-color="#ffffff"/><stop offset="0.7" stop-color="#eef5ff"/><stop offset="1" stop-color="#a8c8f0"/></radialGradient><circle cx="380.5" cy="219.5" r="9.3" fill="url(#gclock)" stroke="#2c64c8" stroke-width="1.7"/><path d="M380 220 L386.8 212.8" stroke="#4060b8" stroke-width="1.1"/><path d="M380.5 219.5 L383.2 226.5" stroke="#f0a898" stroke-width="1"/><path d="M380.8 220 L379.2 216.3" stroke="#e87868" stroke-width="1.8"/></svg><div style="position:absolute;left:62px;top:243px;width:332px;height:623px;border:1px solid #c8c8c8;border-top:2px solid #c4c4c4;box-sizing:border-box;background:#fff"></div><div style="position:absolute;left:63px;top:245px;width:330px;height:32px;background:#f4f4f4;border-bottom:1px solid #c0c0c0"></div><div style="position:absolute;left:65.3px;top:253.93px;font-size:13.1px;line-height:15.065px;color:#333;white-space:nowrap;">Empregado</div><div style="position:absolute;left:63px;top:278px;width:330px;height:34px;background:#d9effc"></div><div style="position:absolute;left:63px;top:312px;width:330px;height:34px;background:#dcf8e0"></div><div style="position:absolute;left:63px;top:346px;width:330px;height:34px;background:#d9effc"></div><div style="position:absolute;left:63px;top:380px;width:330px;height:33px;background:#dcf8e0"></div><svg style="position:absolute;left:68px;top:284px;overflow:visible;" width="24" height="20" viewBox="68 284 24 20"><circle cx="79" cy="294.3" r="7.3" fill="none" stroke="#555" stroke-width="1.7"/><path d="M76 291.3 L80.5 295.8" stroke="#555" stroke-width="1.5"/><path d="M82.4 293.1 V297.7 H77.8 Z" fill="#555"/></svg><svg style="position:absolute;left:0;top:0" width="200" height="400"><rect x="113" y="305" width="1" height="1" fill="#c0c0c0"/><rect x="113" y="307" width="1" height="1" fill="#c0c0c0"/><rect x="113" y="309" width="1" height="1" fill="#c0c0c0"/><rect x="113" y="311" width="1" height="1" fill="#c0c0c0"/><rect x="113" y="313" width="1" height="1" fill="#c0c0c0"/><rect x="113" y="315" width="1" height="1" fill="#c0c0c0"/><rect x="113" y="317" width="1" height="1" fill="#c0c0c0"/><rect x="113" y="319" width="1" height="1" fill="#c0c0c0"/><rect x="113" y="321" width="1" height="1" fill="#c0c0c0"/><rect x="113" y="323" width="1" height="1" fill="#c0c0c0"/><rect x="113" y="325" width="1" height="1" fill="#c0c0c0"/><rect x="113" y="327" width="1" height="1" fill="#c0c0c0"/><rect x="113" y="329" width="1" height="1" fill="#c0c0c0"/><rect x="113" y="331" width="1" height="1" fill="#c0c0c0"/><rect x="113" y="333" width="1" height="1" fill="#c0c0c0"/><rect x="113" y="335" width="1" height="1" fill="#c0c0c0"/><rect x="113" y="337" width="1" height="1" fill="#c0c0c0"/><rect x="113" y="339" width="1" height="1" fill="#c0c0c0"/><rect x="113" y="341" width="1" height="1" fill="#c0c0c0"/><rect x="113" y="343" width="1" height="1" fill="#c0c0c0"/><rect x="113" y="345" width="1" height="1" fill="#c0c0c0"/><rect x="113" y="347" width="1" height="1" fill="#c0c0c0"/><rect x="113" y="349" width="1" height="1" fill="#c0c0c0"/><rect x="113" y="351" width="1" height="1" fill="#c0c0c0"/><rect x="113" y="353" width="1" height="1" fill="#c0c0c0"/><rect x="113" y="355" width="1" height="1" fill="#c0c0c0"/><rect x="113" y="357" width="1" height="1" fill="#c0c0c0"/><rect x="113" y="359" width="1" height="1" fill="#c0c0c0"/><rect x="113" y="361" width="1" height="1" fill="#c0c0c0"/><rect x="113" y="363" width="1" height="1" fill="#c0c0c0"/><rect x="113" y="365" width="1" height="1" fill="#c0c0c0"/><rect x="113" y="367" width="1" height="1" fill="#c0c0c0"/><rect x="113" y="369" width="1" height="1" fill="#c0c0c0"/><rect x="113" y="371" width="1" height="1" fill="#c0c0c0"/><rect x="113" y="373" width="1" height="1" fill="#c0c0c0"/><rect x="113" y="375" width="1" height="1" fill="#c0c0c0"/><rect x="113" y="377" width="1" height="1" fill="#c0c0c0"/><rect x="113" y="379" width="1" height="1" fill="#c0c0c0"/><rect x="113" y="381" width="1" height="1" fill="#c0c0c0"/><rect x="113" y="383" width="1" height="1" fill="#c0c0c0"/><rect x="113" y="385" width="1" height="1" fill="#c0c0c0"/><rect x="113" y="387" width="1" height="1" fill="#c0c0c0"/><rect x="113" y="389" width="1" height="1" fill="#c0c0c0"/><rect x="113" y="391" width="1" height="1" fill="#c0c0c0"/><rect x="113" y="393" width="1" height="1" fill="#c0c0c0"/><rect x="113" y="395" width="1" height="1" fill="#c0c0c0"/><rect x="115" y="327" width="1" height="1" fill="#c0c0c0"/><rect x="117" y="327" width="1" height="1" fill="#c0c0c0"/><rect x="119" y="327" width="1" height="1" fill="#c0c0c0"/><rect x="121" y="327" width="1" height="1" fill="#c0c0c0"/><rect x="123" y="327" width="1" height="1" fill="#c0c0c0"/><rect x="125" y="327" width="1" height="1" fill="#c0c0c0"/><rect x="127" y="327" width="1" height="1" fill="#c0c0c0"/><rect x="129" y="327" width="1" height="1" fill="#c0c0c0"/><rect x="115" y="361" width="1" height="1" fill="#c0c0c0"/><rect x="117" y="361" width="1" height="1" fill="#c0c0c0"/><rect x="119" y="361" width="1" height="1" fill="#c0c0c0"/><rect x="121" y="361" width="1" height="1" fill="#c0c0c0"/><rect x="123" y="361" width="1" height="1" fill="#c0c0c0"/><rect x="125" y="361" width="1" height="1" fill="#c0c0c0"/><rect x="127" y="361" width="1" height="1" fill="#c0c0c0"/><rect x="129" y="361" width="1" height="1" fill="#c0c0c0"/><rect x="115" y="395" width="1" height="1" fill="#c0c0c0"/><rect x="117" y="395" width="1" height="1" fill="#c0c0c0"/><rect x="119" y="395" width="1" height="1" fill="#c0c0c0"/><rect x="121" y="395" width="1" height="1" fill="#c0c0c0"/><rect x="123" y="395" width="1" height="1" fill="#c0c0c0"/><rect x="125" y="395" width="1" height="1" fill="#c0c0c0"/><rect x="127" y="395" width="1" height="1" fill="#c0c0c0"/><rect x="129" y="395" width="1" height="1" fill="#c0c0c0"/><rect x="88" y="294" width="1" height="1" fill="#c0c0c0"/><rect x="90" y="294" width="1" height="1" fill="#c0c0c0"/><rect x="92" y="294" width="1" height="1" fill="#c0c0c0"/><rect x="94" y="294" width="1" height="1" fill="#c0c0c0"/><rect x="96" y="294" width="1" height="1" fill="#c0c0c0"/><rect x="98" y="294" width="1" height="1" fill="#c0c0c0"/></svg><svg style="position:absolute;left:100px;top:284px;overflow:visible;" width="26" height="20" viewBox="100 284 26 20"><path d="M102 289.5 Q102 288 103.5 288 H108.5 L110.5 290 H118 V295 H102 Z" fill="#6e6e6e"/><path d="M102 301 L104.5 293.5 H121.5 L119 301 Z" fill="#fcc05c"/></svg><div style="position:absolute;left:131.7px;top:288.15px;font-size:13.4px;line-height:15.41px;color:#333;white-space:nowrap;">Odontoloxía</div><svg style="position:absolute;left:134px;top:316px;overflow:visible;" width="24" height="24" viewBox="134 316 24 24"><path d="M137.7698 335.2475 Q137.7698 330.5582 143.129 329.984 H148.871 Q154.2302 330.5582 154.2302 335.2475 Q146 336.3002 137.7698 335.2475 Z" fill="url(#gbody)" stroke="#4e8a28" stroke-width="0.4785"/><path d="M141.4064 323.285 Q141.0236 318.5 146 318.5 Q150.9764 318.5 150.5936 323.285 Q150.785 327.113 148.3925 329.5055 Q146 330.7496 143.6075 329.5055 Q141.215 327.113 141.4064 323.285 Z" fill="#b4683a"/><path d="M143.2247 322.8065 Q146 321.5624 148.7753 322.8065 Q149.0624 327.5915 146 329.027 Q142.9376 327.5915 143.2247 322.8065 Z" fill="url(#gface)"/></svg><div style="position:absolute;left:165.2px;top:321.61px;font-size:13.45px;line-height:15.467px;color:#333;white-space:nowrap;">Estomatólogo 1</div><svg style="position:absolute;left:134px;top:350px;overflow:visible;" width="24" height="24" viewBox="134 350 24 24"><path d="M137.7698 369.2475 Q137.7698 364.5582 143.129 363.984 H148.871 Q154.2302 364.5582 154.2302 369.2475 Q146 370.3002 137.7698 369.2475 Z" fill="url(#gbody)" stroke="#4e8a28" stroke-width="0.4785"/><path d="M141.4064 357.285 Q141.0236 352.5 146 352.5 Q150.9764 352.5 150.5936 357.285 Q150.785 361.113 148.3925 363.5055 Q146 364.7496 143.6075 363.5055 Q141.215 361.113 141.4064 357.285 Z" fill="#b4683a"/><path d="M143.2247 356.8065 Q146 355.5624 148.7753 356.8065 Q149.0624 361.5915 146 363.027 Q142.9376 361.5915 143.2247 356.8065 Z" fill="url(#gface)"/></svg><div style="position:absolute;left:165.2px;top:355.61px;font-size:13.45px;line-height:15.467px;color:#333;white-space:nowrap;">Estomatólogo 2</div><svg style="position:absolute;left:134px;top:384px;overflow:visible;" width="24" height="24" viewBox="134 384 24 24"><path d="M137.7698 403.2475 Q137.7698 398.5582 143.129 397.984 H148.871 Q154.2302 398.5582 154.2302 403.2475 Q146 404.3002 137.7698 403.2475 Z" fill="url(#gbody)" stroke="#4e8a28" stroke-width="0.4785"/><path d="M141.4064 391.285 Q141.0236 386.5 146 386.5 Q150.9764 386.5 150.5936 391.285 Q150.785 395.113 148.3925 397.5055 Q146 398.7496 143.6075 397.5055 Q141.215 395.113 141.4064 391.285 Z" fill="#b4683a"/><path d="M143.2247 390.8065 Q146 389.5624 148.7753 390.8065 Q149.0624 395.5915 146 397.027 Q142.9376 395.5915 143.2247 390.8065 Z" fill="url(#gface)"/></svg><div style="position:absolute;left:165.2px;top:389.61px;font-size:13.45px;line-height:15.467px;color:#333;white-space:nowrap;">Estomatólogo 4</div><div style="position:absolute;left:400px;top:157px;width:1124px;height:713px;background:#f0f0f0"></div><div style="position:absolute;left:408px;top:165px;width:359px;height:675px;background:#fff;border:1px solid #bdbdbd;border-top:2px solid #c4c4c4;border-left:2px solid #c4c4c4;box-sizing:border-box"></div><div style="position:absolute;left:410px;top:167px;width:335px;height:32px;background:#f4f4f4"></div><div style="position:absolute;left:410px;top:199px;width:335px;height:1px;background:#c8c8c8"></div><div style="position:absolute;left:491.6px;top:176.56px;font-size:13.5px;line-height:15.525px;color:#333;white-space:nowrap;">1. Estomatólogo 1 (Odontoloxía)</div><div style="position:absolute;left:410px;top:200px;width:335px;height:33px;background:#f4f4f4"></div><div style="position:absolute;left:410px;top:233px;width:335px;height:1px;background:#c8c8c8"></div><div style="position:absolute;left:540px;top:200px;width:1px;height:33px;background:#cfcfcf"></div><div style="position:absolute;left:590px;top:200px;width:1px;height:33px;background:#cfcfcf"></div><div style="position:absolute;left:644px;top:200px;width:1px;height:33px;background:#cfcfcf"></div><div style="position:absolute;left:446px;top:209.56px;font-size:13.5px;line-height:15.525px;color:#333;white-space:nowrap;">Data</div><svg style="position:absolute;left:516px;top:212px;overflow:visible;" width="14" height="10" viewBox="516 212 14 10"><path d="M519 221 H530 L524.5 215 Z" fill="#555"/></svg><div style="position:absolute;left:546px;top:209.93px;font-size:13.1px;line-height:15.065px;color:#333;white-space:nowrap;">Tempo</div><div style="position:absolute;left:612.5px;top:209.93px;font-size:13.1px;line-height:15.065px;color:#333;white-space:nowrap;">#</div><div style="position:absolute;left:685.5px;top:209.93px;font-size:13.1px;line-height:15.065px;color:#333;white-space:nowrap;">Clienta</div><div style="position:absolute;left:745px;top:167px;width:1px;height:672px;background:#d4d4d4"></div><div style="position:absolute;left:746px;top:167px;width:20px;height:672px;background:#fff"></div><svg style="position:absolute;left:750px;top:172px;overflow:visible;" width="14" height="10" viewBox="750 172 14 10"><path d="M752.5 179.5 H759.5 L756 175.5 Z" fill="#707070"/></svg><div style="position:absolute;left:751px;top:188px;width:10px;height:484px;background:#b9b9b9"></div><svg style="position:absolute;left:750px;top:824px;overflow:visible;" width="14" height="10" viewBox="750 824 14 10"><path d="M752.5 826.5 H759.5 L756 830.5 Z" fill="#707070"/></svg><div style="position:absolute;left:410px;top:234px;width:335px;height:34px;background:#d9effc"></div><svg style="position:absolute;left:416px;top:241px;overflow:visible;" width="20" height="20" viewBox="416 241 20 20"><circle cx="425.4" cy="250.7" r="7.3" fill="none" stroke="#505050" stroke-width="1.7"/><path d="M422.4 247.7 L426.9 252.2" stroke="#505050" stroke-width="1.5"/><path d="M428.79999999999995 249.5 V254.1 H424.2 Z" fill="#505050"/></svg><div style="position:absolute;left:442px;top:234px;width:303px;height:34px;background:#0080c4;outline:1px dotted #f08040;outline-offset:-1px;"></div><div style="position:absolute;left:442.5px;top:234.89px;font-size:13.9px;line-height:15.985px;color:#00e8ff;white-space:nowrap;">23.08.2024</div><div style="position:absolute;left:644.4px;top:235.35px;font-size:13.4px;line-height:15.41px;color:#00e8ff;white-space:nowrap;">Venres</div><div style="position:absolute;left:410px;top:268px;width:335px;height:20px;background:#dcf8e0"></div><div style="position:absolute;left:541.4px;top:268.7px;font-size:14px;line-height:16.1px;color:#333;white-space:nowrap;letter-spacing:-0.35px">09:00</div><div style="position:absolute;left:410px;top:288px;width:335px;height:20px;background:#d9effc"></div><div style="position:absolute;left:541.4px;top:288.7px;font-size:14px;line-height:16.1px;color:#333;white-space:nowrap;letter-spacing:-0.35px">09:30</div><div style="position:absolute;left:410px;top:308px;width:335px;height:20px;background:#dcf8e0"></div><div style="position:absolute;left:541px;top:308px;width:204px;height:20px;background:#fffbc0"></div><div style="position:absolute;left:541.4px;top:308.7px;font-size:14px;line-height:16.1px;color:#333;white-space:nowrap;letter-spacing:-0.35px">10:00</div><div style="position:absolute;left:590.3px;top:308.7px;font-size:14px;line-height:16.1px;color:#333;white-space:nowrap;letter-spacing:-0.42px">000080</div><div style="position:absolute;left:644.1px;top:308.7px;font-size:14px;line-height:16.1px;color:#333;white-space:nowrap;letter-spacing:-0.3px">Un paciente 1</div><svg style="position:absolute;left:448px;top:306px;overflow:visible;" width="95" height="24" viewBox="448 306 95 24"><path d="M479.3 312.2 Q481.2 320.5 491.2 324.8" fill="none" stroke="#050505" stroke-width="5" stroke-linecap="round"/><ellipse cx="482.7" cy="311.6" rx="2.2" ry="3.1" transform="rotate(-48 482.7 311.6)" fill="#f03a20"/><ellipse cx="492.6" cy="321.6" rx="2.2" ry="3.2" transform="rotate(-40 492.6 321.6)" fill="#f03a20"/><path d="M502.4 317 H511.6 M507 312.8 V321.2 M503.6 313.8 L510.4 320.2 M510.4 313.8 L503.6 320.2" stroke="#ffa820" stroke-width="3.2" stroke-linecap="round"/><path d="M502.4 317 H511.6 M507 312.8 V321.2 M503.6 313.8 L510.4 320.2 M510.4 313.8 L503.6 320.2" stroke="#ffe840" stroke-width="1.3" stroke-linecap="round"/><path d="M521.3 315.8 L524.6 320.6 L530 312.8" fill="none" stroke="#080808" stroke-width="2.3" stroke-linejoin="miter"/></svg><div style="position:absolute;left:410px;top:328px;width:335px;height:20px;background:#d9effc"></div><div style="position:absolute;left:541.4px;top:328.7px;font-size:14px;line-height:16.1px;color:#333;white-space:nowrap;letter-spacing:-0.35px">10:30</div><div style="position:absolute;left:410px;top:348px;width:335px;height:20px;background:#dcf8e0"></div><div style="position:absolute;left:541px;top:348px;width:204px;height:20px;background:#fffbc0"></div><div style="position:absolute;left:541.4px;top:348.7px;font-size:14px;line-height:16.1px;color:#333;white-space:nowrap;letter-spacing:-0.35px">11:00</div><div style="position:absolute;left:590.3px;top:348.7px;font-size:14px;line-height:16.1px;color:#333;white-space:nowrap;letter-spacing:-0.42px">000081</div><div style="position:absolute;left:644.1px;top:348.7px;font-size:14px;line-height:16.1px;color:#333;white-space:nowrap;letter-spacing:-0.3px">Un paciente 2</div><svg style="position:absolute;left:448px;top:346px;overflow:visible;" width="95" height="24" viewBox="448 346 95 24"><path d="M479.3 352.2 Q481.2 360.5 491.2 364.8" fill="none" stroke="#050505" stroke-width="5" stroke-linecap="round"/><ellipse cx="482.7" cy="351.6" rx="2.2" ry="3.1" transform="rotate(-48 482.7 351.6)" fill="#f03a20"/><ellipse cx="492.6" cy="361.6" rx="2.2" ry="3.2" transform="rotate(-40 492.6 361.6)" fill="#f03a20"/><path d="M521.3 355.8 L524.6 360.6 L530 352.8" fill="none" stroke="#080808" stroke-width="2.3" stroke-linejoin="miter"/></svg><div style="position:absolute;left:410px;top:368px;width:335px;height:20px;background:#d9effc"></div><div style="position:absolute;left:541.4px;top:368.7px;font-size:14px;line-height:16.1px;color:#333;white-space:nowrap;letter-spacing:-0.35px">11:30</div><div style="position:absolute;left:410px;top:388px;width:335px;height:20px;background:#dcf8e0"></div><div style="position:absolute;left:541.4px;top:388.7px;font-size:14px;line-height:16.1px;color:#333;white-space:nowrap;letter-spacing:-0.35px">12:00</div><div style="position:absolute;left:410px;top:408px;width:335px;height:20px;background:#d9effc"></div><div style="position:absolute;left:541.4px;top:408.7px;font-size:14px;line-height:16.1px;color:#333;white-space:nowrap;letter-spacing:-0.35px">12:30</div><div style="position:absolute;left:410px;top:428px;width:335px;height:20px;background:#dcf8e0"></div><div style="position:absolute;left:541.4px;top:428.7px;font-size:14px;line-height:16.1px;color:#333;white-space:nowrap;letter-spacing:-0.35px">13:00</div><div style="position:absolute;left:410px;top:448px;width:335px;height:20px;background:#d9effc"></div><div style="position:absolute;left:541.4px;top:448.7px;font-size:14px;line-height:16.1px;color:#333;white-space:nowrap;letter-spacing:-0.35px">13:30</div><div style="position:absolute;left:410px;top:468px;width:335px;height:20px;background:#dcf8e0"></div><div style="position:absolute;left:541.4px;top:468.7px;font-size:14px;line-height:16.1px;color:#333;white-space:nowrap;letter-spacing:-0.35px">14:00</div><div style="position:absolute;left:410px;top:488px;width:335px;height:20px;background:#d9effc"></div><div style="position:absolute;left:541.4px;top:488.7px;font-size:14px;line-height:16.1px;color:#333;white-space:nowrap;letter-spacing:-0.35px">14:30</div><div style="position:absolute;left:410px;top:508px;width:335px;height:20px;background:#dcf8e0"></div><div style="position:absolute;left:541.4px;top:508.7px;font-size:14px;line-height:16.1px;color:#333;white-space:nowrap;letter-spacing:-0.35px">15:00</div><div style="position:absolute;left:410px;top:528px;width:335px;height:20px;background:#d9effc"></div><div style="position:absolute;left:541.4px;top:528.7px;font-size:14px;line-height:16.1px;color:#333;white-space:nowrap;letter-spacing:-0.35px">15:30</div><div style="position:absolute;left:410px;top:548px;width:335px;height:20px;background:#dcf8e0"></div><div style="position:absolute;left:541.4px;top:548.7px;font-size:14px;line-height:16.1px;color:#333;white-space:nowrap;letter-spacing:-0.35px">16:00</div><div style="position:absolute;left:410px;top:568px;width:335px;height:20px;background:#d9effc"></div><div style="position:absolute;left:541.4px;top:568.7px;font-size:14px;line-height:16.1px;color:#333;white-space:nowrap;letter-spacing:-0.35px">16:30</div><div style="position:absolute;left:410px;top:588px;width:335px;height:20px;background:#dcf8e0"></div><div style="position:absolute;left:541.4px;top:588.7px;font-size:14px;line-height:16.1px;color:#333;white-space:nowrap;letter-spacing:-0.35px">17:00</div><div style="position:absolute;left:410px;top:608px;width:335px;height:20px;background:#d9effc"></div><div style="position:absolute;left:541.4px;top:608.7px;font-size:14px;line-height:16.1px;color:#333;white-space:nowrap;letter-spacing:-0.35px">17:30</div><div style="position:absolute;left:410px;top:628px;width:335px;height:33px;background:#dcf8e0"></div><svg style="position:absolute;left:416px;top:635px;overflow:visible;" width="20" height="20" viewBox="416 635 20 20"><circle cx="425.4" cy="644.7" r="7.3" fill="none" stroke="#505050" stroke-width="1.7"/><path d="M422.4 641.7 L426.9 646.2" stroke="#505050" stroke-width="1.5"/><path d="M428.79999999999995 643.5 V648.1 H424.2 Z" fill="#505050"/></svg><div style="position:absolute;left:442px;top:628px;width:303px;height:33px;background:#0080c4;"></div><div style="position:absolute;left:442.5px;top:628.89px;font-size:13.9px;line-height:15.985px;color:#ffffff;white-space:nowrap;">24.08.2024</div><div style="position:absolute;left:644.4px;top:629.35px;font-size:13.4px;line-height:15.41px;color:#ffffff;white-space:nowrap;">Sábado</div><div style="position:absolute;left:410px;top:661px;width:335px;height:20px;background:#d9effc"></div><div style="position:absolute;left:541.4px;top:661.7px;font-size:14px;line-height:16.1px;color:#333;white-space:nowrap;letter-spacing:-0.35px">09:00</div><div style="position:absolute;left:410px;top:681px;width:335px;height:20px;background:#dcf8e0"></div><div style="position:absolute;left:541.4px;top:681.7px;font-size:14px;line-height:16.1px;color:#333;white-space:nowrap;letter-spacing:-0.35px">09:30</div><div style="position:absolute;left:410px;top:701px;width:335px;height:20px;background:#d9effc"></div><div style="position:absolute;left:541px;top:701px;width:204px;height:20px;background:#fffbc0"></div><div style="position:absolute;left:541.4px;top:701.7px;font-size:14px;line-height:16.1px;color:#b81818;white-space:nowrap;letter-spacing:-0.35px">10:00</div><div style="position:absolute;left:590.3px;top:701.7px;font-size:14px;line-height:16.1px;color:#b81818;white-space:nowrap;letter-spacing:-0.42px">000085</div><div style="position:absolute;left:644.1px;top:701.7px;font-size:14px;line-height:16.1px;color:#b81818;white-space:nowrap;letter-spacing:-0.3px">Un paciente 6</div><svg style="position:absolute;left:448px;top:699px;overflow:visible;" width="95" height="24" viewBox="448 699 95 24"><path d="M479.3 705.2 Q481.2 713.5 491.2 717.8" fill="none" stroke="#050505" stroke-width="5" stroke-linecap="round"/><ellipse cx="482.7" cy="704.6" rx="2.2" ry="3.1" transform="rotate(-48 482.7 704.6)" fill="#f03a20"/><ellipse cx="492.6" cy="714.6" rx="2.2" ry="3.2" transform="rotate(-40 492.6 714.6)" fill="#f03a20"/></svg><div style="position:absolute;left:410px;top:721px;width:335px;height:20px;background:#dcf8e0"></div><div style="position:absolute;left:541.4px;top:721.7px;font-size:14px;line-height:16.1px;color:#333;white-space:nowrap;letter-spacing:-0.35px">10:30</div><div style="position:absolute;left:410px;top:741px;width:335px;height:20px;background:#d9effc"></div><div style="position:absolute;left:541.4px;top:741.7px;font-size:14px;line-height:16.1px;color:#333;white-space:nowrap;letter-spacing:-0.35px">11:00</div><div style="position:absolute;left:410px;top:761px;width:335px;height:20px;background:#dcf8e0"></div><div style="position:absolute;left:541.4px;top:761.7px;font-size:14px;line-height:16.1px;color:#333;white-space:nowrap;letter-spacing:-0.35px">11:30</div><div style="position:absolute;left:410px;top:781px;width:335px;height:20px;background:#d9effc"></div><div style="position:absolute;left:541.4px;top:781.7px;font-size:14px;line-height:16.1px;color:#333;white-space:nowrap;letter-spacing:-0.35px">12:00</div><div style="position:absolute;left:410px;top:801px;width:335px;height:20px;background:#dcf8e0"></div><div style="position:absolute;left:541.4px;top:801.7px;font-size:14px;line-height:16.1px;color:#333;white-space:nowrap;letter-spacing:-0.35px">12:30</div><div style="position:absolute;left:410px;top:821px;width:335px;height:20px;background:#d9effc"></div><div style="position:absolute;left:541.4px;top:821.7px;font-size:14px;line-height:16.1px;color:#333;white-space:nowrap;letter-spacing:-0.35px">13:00</div><div style="position:absolute;left:407px;top:840px;width:361px;height:4px;background:#f0f0f0"></div><div style="position:absolute;left:408px;top:839px;width:359px;height:1px;background:#bdbdbd"></div><div style="position:absolute;left:776px;top:165px;width:359px;height:675px;background:#fff;border:1px solid #bdbdbd;border-top:2px solid #c4c4c4;border-left:2px solid #c4c4c4;box-sizing:border-box"></div><div style="position:absolute;left:778px;top:167px;width:335px;height:32px;background:#f4f4f4"></div><div style="position:absolute;left:778px;top:199px;width:335px;height:1px;background:#c8c8c8"></div><div style="position:absolute;left:859.6px;top:176.56px;font-size:13.5px;line-height:15.525px;color:#333;white-space:nowrap;">2. Estomatólogo 2 (Odontoloxía)</div><div style="position:absolute;left:778px;top:200px;width:335px;height:33px;background:#f4f4f4"></div><div style="position:absolute;left:778px;top:233px;width:335px;height:1px;background:#c8c8c8"></div><div style="position:absolute;left:908px;top:200px;width:1px;height:33px;background:#cfcfcf"></div><div style="position:absolute;left:958px;top:200px;width:1px;height:33px;background:#cfcfcf"></div><div style="position:absolute;left:1012px;top:200px;width:1px;height:33px;background:#cfcfcf"></div><div style="position:absolute;left:814px;top:209.56px;font-size:13.5px;line-height:15.525px;color:#333;white-space:nowrap;">Data</div><svg style="position:absolute;left:884px;top:212px;overflow:visible;" width="14" height="10" viewBox="884 212 14 10"><path d="M887 221 H898 L892.5 215 Z" fill="#555"/></svg><div style="position:absolute;left:914px;top:209.93px;font-size:13.1px;line-height:15.065px;color:#333;white-space:nowrap;">Tempo</div><div style="position:absolute;left:980.5px;top:209.93px;font-size:13.1px;line-height:15.065px;color:#333;white-space:nowrap;">#</div><div style="position:absolute;left:1053.5px;top:209.93px;font-size:13.1px;line-height:15.065px;color:#333;white-space:nowrap;">Clienta</div><div style="position:absolute;left:1113px;top:167px;width:1px;height:672px;background:#d4d4d4"></div><div style="position:absolute;left:1114px;top:167px;width:20px;height:672px;background:#fff"></div><svg style="position:absolute;left:1118px;top:172px;overflow:visible;" width="14" height="10" viewBox="1118 172 14 10"><path d="M1120.5 179.5 H1127.5 L1124 175.5 Z" fill="#707070"/></svg><div style="position:absolute;left:1119px;top:188px;width:10px;height:484px;background:#b9b9b9"></div><svg style="position:absolute;left:1118px;top:824px;overflow:visible;" width="14" height="10" viewBox="1118 824 14 10"><path d="M1120.5 826.5 H1127.5 L1124 830.5 Z" fill="#707070"/></svg><div style="position:absolute;left:778px;top:234px;width:335px;height:34px;background:#d9effc"></div><svg style="position:absolute;left:784px;top:241px;overflow:visible;" width="20" height="20" viewBox="784 241 20 20"><circle cx="793.4" cy="250.7" r="7.3" fill="none" stroke="#505050" stroke-width="1.7"/><path d="M790.4 247.7 L794.9 252.2" stroke="#505050" stroke-width="1.5"/><path d="M796.8 249.5 V254.1 H792.1999999999999 Z" fill="#505050"/></svg><div style="position:absolute;left:810px;top:234px;width:303px;height:34px;background:#0080c4;"></div><div style="position:absolute;left:810.5px;top:234.89px;font-size:13.9px;line-height:15.985px;color:#00e8ff;white-space:nowrap;">23.08.2024</div><div style="position:absolute;left:1012.4px;top:235.35px;font-size:13.4px;line-height:15.41px;color:#00e8ff;white-space:nowrap;">Venres</div><div style="position:absolute;left:778px;top:268px;width:335px;height:20px;background:#dcf8e0"></div><div style="position:absolute;left:909.4px;top:268.7px;font-size:14px;line-height:16.1px;color:#333;white-space:nowrap;letter-spacing:-0.35px">09:00</div><div style="position:absolute;left:778px;top:288px;width:335px;height:20px;background:#d9effc"></div><div style="position:absolute;left:909.4px;top:288.7px;font-size:14px;line-height:16.1px;color:#333;white-space:nowrap;letter-spacing:-0.35px">09:30</div><div style="position:absolute;left:778px;top:308px;width:335px;height:20px;background:#dcf8e0"></div><div style="position:absolute;left:909.4px;top:308.7px;font-size:14px;line-height:16.1px;color:#333;white-space:nowrap;letter-spacing:-0.35px">10:00</div><div style="position:absolute;left:778px;top:328px;width:335px;height:20px;background:#d9effc"></div><div style="position:absolute;left:909.4px;top:328.7px;font-size:14px;line-height:16.1px;color:#333;white-space:nowrap;letter-spacing:-0.35px">10:30</div><div style="position:absolute;left:778px;top:348px;width:335px;height:20px;background:#dcf8e0"></div><div style="position:absolute;left:909.4px;top:348.7px;font-size:14px;line-height:16.1px;color:#333;white-space:nowrap;letter-spacing:-0.35px">11:00</div><div style="position:absolute;left:778px;top:368px;width:335px;height:20px;background:#d9effc"></div><div style="position:absolute;left:909.4px;top:368.7px;font-size:14px;line-height:16.1px;color:#333;white-space:nowrap;letter-spacing:-0.35px">11:30</div><div style="position:absolute;left:778px;top:388px;width:335px;height:20px;background:#dcf8e0"></div><div style="position:absolute;left:909.4px;top:388.7px;font-size:14px;line-height:16.1px;color:#333;white-space:nowrap;letter-spacing:-0.35px">12:00</div><div style="position:absolute;left:778px;top:408px;width:335px;height:20px;background:#d9effc"></div><div style="position:absolute;left:909.4px;top:408.7px;font-size:14px;line-height:16.1px;color:#333;white-space:nowrap;letter-spacing:-0.35px">12:30</div><div style="position:absolute;left:778px;top:428px;width:335px;height:20px;background:#dcf8e0"></div><div style="position:absolute;left:909.4px;top:428.7px;font-size:14px;line-height:16.1px;color:#333;white-space:nowrap;letter-spacing:-0.35px">13:00</div><div style="position:absolute;left:778px;top:448px;width:335px;height:20px;background:#d9effc"></div><div style="position:absolute;left:909.4px;top:448.7px;font-size:14px;line-height:16.1px;color:#333;white-space:nowrap;letter-spacing:-0.35px">13:30</div><div style="position:absolute;left:778px;top:468px;width:335px;height:20px;background:#dcf8e0"></div><div style="position:absolute;left:909px;top:468px;width:204px;height:20px;background:#fffbc0"></div><div style="position:absolute;left:909.4px;top:468.7px;font-size:14px;line-height:16.1px;color:#333;white-space:nowrap;letter-spacing:-0.35px">14:00</div><div style="position:absolute;left:958.3px;top:468.7px;font-size:14px;line-height:16.1px;color:#333;white-space:nowrap;letter-spacing:-0.42px">000082</div><div style="position:absolute;left:1012.1px;top:468.7px;font-size:14px;line-height:16.1px;color:#333;white-space:nowrap;letter-spacing:-0.3px">Un paciente 3</div><svg style="position:absolute;left:816px;top:466px;overflow:visible;" width="95" height="24" viewBox="816 466 95 24"><path d="M847.3 472.2 Q849.2 480.5 859.2 484.8" fill="none" stroke="#050505" stroke-width="5" stroke-linecap="round"/><ellipse cx="850.7" cy="471.6" rx="2.2" ry="3.1" transform="rotate(-48 850.7 471.6)" fill="#f03a20"/><ellipse cx="860.6" cy="481.6" rx="2.2" ry="3.2" transform="rotate(-40 860.6 481.6)" fill="#f03a20"/><path d="M864.7 471.7 L867.7 468.7" stroke="#888" stroke-width="2"/><path d="M866.3 470.3 L869.5 473.5" stroke="#999" stroke-width="2"/><path d="M867.1 474.9 L870.9 471.1 L879.7 479.9 L875.9 483.7 Z" fill="#dcdcdc" stroke="#8a8a8a" stroke-width="1"/><path d="M870.0 474.0 L876.5 480.5" stroke="#f8f8f8" stroke-width="1.2"/><circle cx="873.8" cy="477.8" r="1.2" fill="#333"/><path d="M877.8 481.8 L883.5 487.5" stroke="#9a9a9a" stroke-width="1.4"/><path d="M889.3 475.8 L892.6 480.6 L898 472.8" fill="none" stroke="#080808" stroke-width="2.3" stroke-linejoin="miter"/></svg><div style="position:absolute;left:778px;top:488px;width:335px;height:20px;background:#d9effc"></div><div style="position:absolute;left:909.4px;top:488.7px;font-size:14px;line-height:16.1px;color:#333;white-space:nowrap;letter-spacing:-0.35px">14:30</div><div style="position:absolute;left:778px;top:508px;width:335px;height:20px;background:#dcf8e0"></div><div style="position:absolute;left:909.4px;top:508.7px;font-size:14px;line-height:16.1px;color:#333;white-space:nowrap;letter-spacing:-0.35px">15:00</div><div style="position:absolute;left:778px;top:528px;width:335px;height:20px;background:#d9effc"></div><div style="position:absolute;left:909.4px;top:528.7px;font-size:14px;line-height:16.1px;color:#333;white-space:nowrap;letter-spacing:-0.35px">15:30</div><div style="position:absolute;left:778px;top:548px;width:335px;height:20px;background:#dcf8e0"></div><div style="position:absolute;left:909.4px;top:548.7px;font-size:14px;line-height:16.1px;color:#333;white-space:nowrap;letter-spacing:-0.35px">16:00</div><div style="position:absolute;left:778px;top:568px;width:335px;height:20px;background:#d9effc"></div><div style="position:absolute;left:909.4px;top:568.7px;font-size:14px;line-height:16.1px;color:#333;white-space:nowrap;letter-spacing:-0.35px">16:30</div><div style="position:absolute;left:778px;top:588px;width:335px;height:20px;background:#dcf8e0"></div><div style="position:absolute;left:909.4px;top:588.7px;font-size:14px;line-height:16.1px;color:#333;white-space:nowrap;letter-spacing:-0.35px">17:00</div><div style="position:absolute;left:778px;top:608px;width:335px;height:20px;background:#d9effc"></div><div style="position:absolute;left:909.4px;top:608.7px;font-size:14px;line-height:16.1px;color:#333;white-space:nowrap;letter-spacing:-0.35px">17:30</div><div style="position:absolute;left:778px;top:628px;width:335px;height:33px;background:#dcf8e0"></div><svg style="position:absolute;left:784px;top:635px;overflow:visible;" width="20" height="20" viewBox="784 635 20 20"><circle cx="793.4" cy="644.7" r="7.3" fill="none" stroke="#505050" stroke-width="1.7"/><path d="M790.4 641.7 L794.9 646.2" stroke="#505050" stroke-width="1.5"/><path d="M796.8 643.5 V648.1 H792.1999999999999 Z" fill="#505050"/></svg><div style="position:absolute;left:810px;top:628px;width:303px;height:33px;background:#0080c4;"></div><div style="position:absolute;left:810.5px;top:628.89px;font-size:13.9px;line-height:15.985px;color:#ffffff;white-space:nowrap;">24.08.2024</div><div style="position:absolute;left:1012.4px;top:629.35px;font-size:13.4px;line-height:15.41px;color:#ffffff;white-space:nowrap;">Sábado</div><div style="position:absolute;left:778px;top:661px;width:335px;height:20px;background:#d9effc"></div><div style="position:absolute;left:909.4px;top:661.7px;font-size:14px;line-height:16.1px;color:#333;white-space:nowrap;letter-spacing:-0.35px">09:00</div><div style="position:absolute;left:778px;top:681px;width:335px;height:20px;background:#dcf8e0"></div><div style="position:absolute;left:909.4px;top:681.7px;font-size:14px;line-height:16.1px;color:#333;white-space:nowrap;letter-spacing:-0.35px">09:30</div><div style="position:absolute;left:778px;top:701px;width:335px;height:20px;background:#d9effc"></div><div style="position:absolute;left:909.4px;top:701.7px;font-size:14px;line-height:16.1px;color:#333;white-space:nowrap;letter-spacing:-0.35px">10:00</div><div style="position:absolute;left:778px;top:721px;width:335px;height:20px;background:#dcf8e0"></div><div style="position:absolute;left:909.4px;top:721.7px;font-size:14px;line-height:16.1px;color:#333;white-space:nowrap;letter-spacing:-0.35px">10:30</div><div style="position:absolute;left:778px;top:741px;width:335px;height:20px;background:#d9effc"></div><div style="position:absolute;left:909.4px;top:741.7px;font-size:14px;line-height:16.1px;color:#333;white-space:nowrap;letter-spacing:-0.35px">11:00</div><div style="position:absolute;left:778px;top:761px;width:335px;height:20px;background:#dcf8e0"></div><div style="position:absolute;left:909.4px;top:761.7px;font-size:14px;line-height:16.1px;color:#333;white-space:nowrap;letter-spacing:-0.35px">11:30</div><div style="position:absolute;left:778px;top:781px;width:335px;height:20px;background:#d9effc"></div><div style="position:absolute;left:909.4px;top:781.7px;font-size:14px;line-height:16.1px;color:#333;white-space:nowrap;letter-spacing:-0.35px">12:00</div><div style="position:absolute;left:778px;top:801px;width:335px;height:20px;background:#dcf8e0"></div><div style="position:absolute;left:909.4px;top:801.7px;font-size:14px;line-height:16.1px;color:#333;white-space:nowrap;letter-spacing:-0.35px">12:30</div><div style="position:absolute;left:778px;top:821px;width:335px;height:20px;background:#d9effc"></div><div style="position:absolute;left:909.4px;top:821.7px;font-size:14px;line-height:16.1px;color:#333;white-space:nowrap;letter-spacing:-0.35px">13:00</div><div style="position:absolute;left:775px;top:840px;width:361px;height:4px;background:#f0f0f0"></div><div style="position:absolute;left:776px;top:839px;width:359px;height:1px;background:#bdbdbd"></div><div style="position:absolute;left:1143px;top:165px;width:359px;height:675px;background:#fff;border:1px solid #bdbdbd;border-top:2px solid #c4c4c4;border-left:2px solid #c4c4c4;box-sizing:border-box"></div><div style="position:absolute;left:1145px;top:167px;width:335px;height:32px;background:#f4f4f4"></div><div style="position:absolute;left:1145px;top:199px;width:335px;height:1px;background:#c8c8c8"></div><div style="position:absolute;left:1226.6px;top:176.56px;font-size:13.5px;line-height:15.525px;color:#333;white-space:nowrap;">3. Estomatólogo 4 (Odontoloxía)</div><div style="position:absolute;left:1145px;top:200px;width:335px;height:33px;background:#f4f4f4"></div><div style="position:absolute;left:1145px;top:233px;width:335px;height:1px;background:#c8c8c8"></div><div style="position:absolute;left:1275px;top:200px;width:1px;height:33px;background:#cfcfcf"></div><div style="position:absolute;left:1325px;top:200px;width:1px;height:33px;background:#cfcfcf"></div><div style="position:absolute;left:1379px;top:200px;width:1px;height:33px;background:#cfcfcf"></div><div style="position:absolute;left:1181px;top:209.56px;font-size:13.5px;line-height:15.525px;color:#333;white-space:nowrap;">Data</div><svg style="position:absolute;left:1251px;top:212px;overflow:visible;" width="14" height="10" viewBox="1251 212 14 10"><path d="M1254 221 H1265 L1259.5 215 Z" fill="#555"/></svg><div style="position:absolute;left:1281px;top:209.93px;font-size:13.1px;line-height:15.065px;color:#333;white-space:nowrap;">Tempo</div><div style="position:absolute;left:1347.5px;top:209.93px;font-size:13.1px;line-height:15.065px;color:#333;white-space:nowrap;">#</div><div style="position:absolute;left:1420.5px;top:209.93px;font-size:13.1px;line-height:15.065px;color:#333;white-space:nowrap;">Clienta</div><div style="position:absolute;left:1480px;top:167px;width:1px;height:672px;background:#d4d4d4"></div><div style="position:absolute;left:1481px;top:167px;width:20px;height:672px;background:#fff"></div><svg style="position:absolute;left:1485px;top:172px;overflow:visible;" width="14" height="10" viewBox="1485 172 14 10"><path d="M1487.5 179.5 H1494.5 L1491 175.5 Z" fill="#707070"/></svg><div style="position:absolute;left:1486px;top:188px;width:10px;height:484px;background:#b9b9b9"></div><svg style="position:absolute;left:1485px;top:824px;overflow:visible;" width="14" height="10" viewBox="1485 824 14 10"><path d="M1487.5 826.5 H1494.5 L1491 830.5 Z" fill="#707070"/></svg><div style="position:absolute;left:1145px;top:234px;width:335px;height:34px;background:#d9effc"></div><svg style="position:absolute;left:1151px;top:241px;overflow:visible;" width="20" height="20" viewBox="1151 241 20 20"><circle cx="1160.4" cy="250.7" r="7.3" fill="none" stroke="#505050" stroke-width="1.7"/><path d="M1157.4 247.7 L1161.9 252.2" stroke="#505050" stroke-width="1.5"/><path d="M1163.8000000000002 249.5 V254.1 H1159.2 Z" fill="#505050"/></svg><div style="position:absolute;left:1177px;top:234px;width:303px;height:34px;background:#0080c4;"></div><div style="position:absolute;left:1177.5px;top:234.89px;font-size:13.9px;line-height:15.985px;color:#00e8ff;white-space:nowrap;">23.08.2024</div><div style="position:absolute;left:1379.4px;top:235.35px;font-size:13.4px;line-height:15.41px;color:#00e8ff;white-space:nowrap;">Venres</div><div style="position:absolute;left:1145px;top:268px;width:335px;height:20px;background:#dcf8e0"></div><div style="position:absolute;left:1276.4px;top:268.7px;font-size:14px;line-height:16.1px;color:#333;white-space:nowrap;letter-spacing:-0.35px">09:00</div><div style="position:absolute;left:1145px;top:288px;width:335px;height:20px;background:#d9effc"></div><div style="position:absolute;left:1276.4px;top:288.7px;font-size:14px;line-height:16.1px;color:#333;white-space:nowrap;letter-spacing:-0.35px">09:30</div><div style="position:absolute;left:1145px;top:308px;width:335px;height:20px;background:#dcf8e0"></div><div style="position:absolute;left:1276.4px;top:308.7px;font-size:14px;line-height:16.1px;color:#333;white-space:nowrap;letter-spacing:-0.35px">10:00</div><div style="position:absolute;left:1145px;top:328px;width:335px;height:20px;background:#d9effc"></div><div style="position:absolute;left:1276.4px;top:328.7px;font-size:14px;line-height:16.1px;color:#333;white-space:nowrap;letter-spacing:-0.35px">10:30</div><div style="position:absolute;left:1145px;top:348px;width:335px;height:20px;background:#dcf8e0"></div><div style="position:absolute;left:1276.4px;top:348.7px;font-size:14px;line-height:16.1px;color:#333;white-space:nowrap;letter-spacing:-0.35px">11:00</div><div style="position:absolute;left:1145px;top:368px;width:335px;height:20px;background:#d9effc"></div><div style="position:absolute;left:1276px;top:368px;width:204px;height:20px;background:#ffd6e6"></div><div style="position:absolute;left:1276.4px;top:368.7px;font-size:14px;line-height:16.1px;color:#333;white-space:nowrap;letter-spacing:-0.35px">11:30</div><div style="position:absolute;left:1325.3px;top:368.7px;font-size:14px;line-height:16.1px;color:#333;white-space:nowrap;letter-spacing:-0.42px">000083</div><div style="position:absolute;left:1379.1px;top:368.7px;font-size:14px;line-height:16.1px;color:#333;white-space:nowrap;letter-spacing:-0.3px">Un paciente 4</div><svg style="position:absolute;left:1183px;top:366px;overflow:visible;" width="95" height="24" viewBox="1183 366 95 24"><path d="M1214.3 372.2 Q1216.2 380.5 1226.2 384.8" fill="none" stroke="#050505" stroke-width="5" stroke-linecap="round"/><ellipse cx="1217.7" cy="371.6" rx="2.2" ry="3.1" transform="rotate(-48 1217.7 371.6)" fill="#f03a20"/><ellipse cx="1227.6" cy="381.6" rx="2.2" ry="3.2" transform="rotate(-40 1227.6 381.6)" fill="#f03a20"/></svg><div style="position:absolute;left:1145px;top:388px;width:335px;height:20px;background:#dcf8e0"></div><div style="position:absolute;left:1276.4px;top:388.7px;font-size:14px;line-height:16.1px;color:#333;white-space:nowrap;letter-spacing:-0.35px">12:00</div><div style="position:absolute;left:1145px;top:408px;width:335px;height:20px;background:#d9effc"></div><div style="position:absolute;left:1276px;top:408px;width:204px;height:20px;background:#fffbc0"></div><div style="position:absolute;left:1276.4px;top:408.7px;font-size:14px;line-height:16.1px;color:#333;white-space:nowrap;letter-spacing:-0.35px">12:30</div><div style="position:absolute;left:1325.3px;top:408.7px;font-size:14px;line-height:16.1px;color:#333;white-space:nowrap;letter-spacing:-0.42px">000084</div><div style="position:absolute;left:1379.1px;top:408.7px;font-size:14px;line-height:16.1px;color:#333;white-space:nowrap;letter-spacing:-0.3px">Un paciente 5</div><svg style="position:absolute;left:1183px;top:406px;overflow:visible;" width="95" height="24" viewBox="1183 406 95 24"><path d="M1214.3 412.2 Q1216.2 420.5 1226.2 424.8" fill="none" stroke="#050505" stroke-width="5" stroke-linecap="round"/><ellipse cx="1217.7" cy="411.6" rx="2.2" ry="3.1" transform="rotate(-48 1217.7 411.6)" fill="#f03a20"/><ellipse cx="1227.6" cy="421.6" rx="2.2" ry="3.2" transform="rotate(-40 1227.6 421.6)" fill="#f03a20"/><path d="M1231 418.0 Q1240 408.5 1249 418.0 Q1240 425.0 1231 418.0 Z" fill="#f8f8f8" stroke="#6878b8" stroke-width="1"/><path d="M1231 418.0 Q1240 408.5 1249 418.0" fill="none" stroke="#c08050" stroke-width="1.4"/><circle cx="1240" cy="417.5" r="4.2" fill="#6c88b0"/><circle cx="1240" cy="417.5" r="1.8" fill="#203050"/><path d="M1256.3 415.8 L1259.6 420.6 L1265 412.8" fill="none" stroke="#080808" stroke-width="2.3" stroke-linejoin="miter"/></svg><div style="position:absolute;left:1145px;top:428px;width:335px;height:20px;background:#dcf8e0"></div><div style="position:absolute;left:1276.4px;top:428.7px;font-size:14px;line-height:16.1px;color:#333;white-space:nowrap;letter-spacing:-0.35px">13:00</div><div style="position:absolute;left:1145px;top:448px;width:335px;height:20px;background:#d9effc"></div><div style="position:absolute;left:1276.4px;top:448.7px;font-size:14px;line-height:16.1px;color:#333;white-space:nowrap;letter-spacing:-0.35px">13:30</div><div style="position:absolute;left:1145px;top:468px;width:335px;height:20px;background:#dcf8e0"></div><div style="position:absolute;left:1276.4px;top:468.7px;font-size:14px;line-height:16.1px;color:#333;white-space:nowrap;letter-spacing:-0.35px">14:00</div><div style="position:absolute;left:1145px;top:488px;width:335px;height:20px;background:#d9effc"></div><div style="position:absolute;left:1276.4px;top:488.7px;font-size:14px;line-height:16.1px;color:#333;white-space:nowrap;letter-spacing:-0.35px">14:30</div><div style="position:absolute;left:1145px;top:508px;width:335px;height:20px;background:#dcf8e0"></div><div style="position:absolute;left:1276.4px;top:508.7px;font-size:14px;line-height:16.1px;color:#333;white-space:nowrap;letter-spacing:-0.35px">15:00</div><div style="position:absolute;left:1145px;top:528px;width:335px;height:20px;background:#d9effc"></div><div style="position:absolute;left:1276.4px;top:528.7px;font-size:14px;line-height:16.1px;color:#333;white-space:nowrap;letter-spacing:-0.35px">15:30</div><div style="position:absolute;left:1145px;top:548px;width:335px;height:20px;background:#dcf8e0"></div><div style="position:absolute;left:1276.4px;top:548.7px;font-size:14px;line-height:16.1px;color:#333;white-space:nowrap;letter-spacing:-0.35px">16:00</div><div style="position:absolute;left:1145px;top:568px;width:335px;height:20px;background:#d9effc"></div><div style="position:absolute;left:1276.4px;top:568.7px;font-size:14px;line-height:16.1px;color:#333;white-space:nowrap;letter-spacing:-0.35px">16:30</div><div style="position:absolute;left:1145px;top:588px;width:335px;height:20px;background:#dcf8e0"></div><div style="position:absolute;left:1276.4px;top:588.7px;font-size:14px;line-height:16.1px;color:#333;white-space:nowrap;letter-spacing:-0.35px">17:00</div><div style="position:absolute;left:1145px;top:608px;width:335px;height:20px;background:#d9effc"></div><div style="position:absolute;left:1276.4px;top:608.7px;font-size:14px;line-height:16.1px;color:#333;white-space:nowrap;letter-spacing:-0.35px">17:30</div><div style="position:absolute;left:1145px;top:628px;width:335px;height:33px;background:#dcf8e0"></div><svg style="position:absolute;left:1151px;top:635px;overflow:visible;" width="20" height="20" viewBox="1151 635 20 20"><circle cx="1160.4" cy="644.7" r="7.3" fill="none" stroke="#505050" stroke-width="1.7"/><path d="M1157.4 641.7 L1161.9 646.2" stroke="#505050" stroke-width="1.5"/><path d="M1163.8000000000002 643.5 V648.1 H1159.2 Z" fill="#505050"/></svg><div style="position:absolute;left:1177px;top:628px;width:303px;height:33px;background:#0080c4;"></div><div style="position:absolute;left:1177.5px;top:628.89px;font-size:13.9px;line-height:15.985px;color:#ffffff;white-space:nowrap;">24.08.2024</div><div style="position:absolute;left:1379.4px;top:629.35px;font-size:13.4px;line-height:15.41px;color:#ffffff;white-space:nowrap;">Sábado</div><div style="position:absolute;left:1145px;top:661px;width:335px;height:20px;background:#d9effc"></div><div style="position:absolute;left:1276.4px;top:661.7px;font-size:14px;line-height:16.1px;color:#333;white-space:nowrap;letter-spacing:-0.35px">09:00</div><div style="position:absolute;left:1145px;top:681px;width:335px;height:20px;background:#dcf8e0"></div><div style="position:absolute;left:1276.4px;top:681.7px;font-size:14px;line-height:16.1px;color:#333;white-space:nowrap;letter-spacing:-0.35px">09:30</div><div style="position:absolute;left:1145px;top:701px;width:335px;height:20px;background:#d9effc"></div><div style="position:absolute;left:1276px;top:701px;width:204px;height:20px;background:#fffbc0"></div><div style="position:absolute;left:1276.4px;top:701.7px;font-size:14px;line-height:16.1px;color:#b81818;white-space:nowrap;letter-spacing:-0.35px">10:00</div><div style="position:absolute;left:1325.3px;top:701.7px;font-size:14px;line-height:16.1px;color:#b81818;white-space:nowrap;letter-spacing:-0.42px">000086</div><div style="position:absolute;left:1379.1px;top:701.7px;font-size:14px;line-height:16.1px;color:#b81818;white-space:nowrap;letter-spacing:-0.3px">Un paciente 7</div><svg style="position:absolute;left:1183px;top:699px;overflow:visible;" width="95" height="24" viewBox="1183 699 95 24"><path d="M1237.4 710 H1246.6 M1242 705.8 V714.2 M1238.6 706.8 L1245.4 713.2 M1245.4 706.8 L1238.6 713.2" stroke="#ffa820" stroke-width="3.2" stroke-linecap="round"/><path d="M1237.4 710 H1246.6 M1242 705.8 V714.2 M1238.6 706.8 L1245.4 713.2 M1245.4 706.8 L1238.6 713.2" stroke="#ffe840" stroke-width="1.3" stroke-linecap="round"/></svg><div style="position:absolute;left:1145px;top:721px;width:335px;height:20px;background:#dcf8e0"></div><div style="position:absolute;left:1276.4px;top:721.7px;font-size:14px;line-height:16.1px;color:#333;white-space:nowrap;letter-spacing:-0.35px">10:30</div><div style="position:absolute;left:1145px;top:741px;width:335px;height:20px;background:#d9effc"></div><div style="position:absolute;left:1276.4px;top:741.7px;font-size:14px;line-height:16.1px;color:#333;white-space:nowrap;letter-spacing:-0.35px">11:00</div><div style="position:absolute;left:1145px;top:761px;width:335px;height:20px;background:#dcf8e0"></div><div style="position:absolute;left:1276.4px;top:761.7px;font-size:14px;line-height:16.1px;color:#333;white-space:nowrap;letter-spacing:-0.35px">11:30</div><div style="position:absolute;left:1145px;top:781px;width:335px;height:20px;background:#d9effc"></div><div style="position:absolute;left:1276.4px;top:781.7px;font-size:14px;line-height:16.1px;color:#333;white-space:nowrap;letter-spacing:-0.35px">12:00</div><div style="position:absolute;left:1145px;top:801px;width:335px;height:20px;background:#dcf8e0"></div><div style="position:absolute;left:1276.4px;top:801.7px;font-size:14px;line-height:16.1px;color:#333;white-space:nowrap;letter-spacing:-0.35px">12:30</div><div style="position:absolute;left:1145px;top:821px;width:335px;height:20px;background:#d9effc"></div><div style="position:absolute;left:1276.4px;top:821.7px;font-size:14px;line-height:16.1px;color:#333;white-space:nowrap;letter-spacing:-0.35px">13:00</div><div style="position:absolute;left:1142px;top:840px;width:361px;height:4px;background:#f0f0f0"></div><div style="position:absolute;left:1143px;top:839px;width:359px;height:1px;background:#bdbdbd"></div><div style="position:absolute;left:22px;top:870px;width:1502px;height:6px;background:#fff;border:1px solid #c4c4c4;box-sizing:border-box"></div><div style="position:absolute;left:22px;top:871px;width:161px;height:55px;background:#fff;border-left:1px solid #c8c8c8;border-right:1px solid #c8c8c8;box-sizing:border-box"></div><div style="position:absolute;left:22px;top:924px;width:161px;height:3px;background:#0ea0f0"></div><svg style="position:absolute;left:38px;top:884px;overflow:visible;" width="34" height="30" viewBox="38 884 34 30"><rect x="40.5" y="886.5" width="29" height="26" rx="2" fill="#e8ecf8" stroke="#6878a8" stroke-width="1"/><rect x="41" y="887" width="28" height="6" fill="url(#gwin)"/><circle cx="65.5" cy="890" r="1" fill="#e04040"/></svg><div style="position:absolute;left:81.7px;top:891.47px;font-size:13.6px;line-height:15.64px;color:#1e96e0;white-space:nowrap;">Rexistro</div><svg style="position:absolute;left:148px;top:890px;overflow:visible;" width="18" height="16" viewBox="148 890 18 16"><path d="M152 894.5 L161.5 903 M161.5 894.5 L152 903" stroke="#1e96e0" stroke-width="2"/></svg><svg style="position:absolute;left:26px;top:927px;overflow:visible;" width="26" height="26" viewBox="26 927 26 26"><circle cx="38.7" cy="939.5" r="10" fill="#3c78b8"/><circle cx="38.7" cy="934.5" r="1.7" fill="#fff"/><rect x="37.2" y="937.5" width="3" height="7" fill="#fff"/></svg><div style="position:absolute;left:70.4px;top:931.84px;font-size:13.85px;line-height:15.927px;color:#333;white-space:nowrap;">7.2.9045.10 Standard</div><div style="position:absolute;left:229px;top:930px;width:1px;height:19px;background:#c0c0c0"></div><div style="position:absolute;left:399px;top:930px;width:1px;height:19px;background:#c0c0c0"></div><div style="position:absolute;left:578px;top:930px;width:1px;height:19px;background:#c0c0c0"></div><div style="position:absolute;left:727px;top:930px;width:1px;height:19px;background:#c0c0c0"></div><div style="position:absolute;left:876px;top:930px;width:1px;height:19px;background:#c0c0c0"></div><div style="position:absolute;left:1493px;top:930px;width:1px;height:19px;background:#c0c0c0"></div><svg style="position:absolute;left:240px;top:927px;overflow:visible;" width="22" height="24" viewBox="240 927 22 24"><rect x="243" y="930" width="16" height="18" rx="3" fill="url(#gdb)" stroke="#c88030" stroke-width="0.8"/><path d="M243.5 936 H258.5 M243.5 942 H258.5" stroke="#c88030" stroke-width="0.8"/></svg><div style="position:absolute;left:281.6px;top:931.75px;font-size:13.95px;line-height:16.042px;color:#333;white-space:nowrap;">localhost (utf8)</div><svg style="position:absolute;left:410px;top:927px;overflow:visible;" width="24" height="24" viewBox="410 927 24 24"><path d="M412.5204 947.255 Q412.5204 942.4236 418.042 941.832 H423.958 Q429.4796 942.4236 429.4796 947.255 Q421 948.3396 412.5204 947.255 Z" fill="url(#gbody)" stroke="#4e8a28" stroke-width="0.493"/><path d="M416.2672 934.93 Q415.8728 930 421 930 Q426.1272 930 425.7328 934.93 Q425.93 938.874 423.465 941.339 Q421 942.6208 418.535 941.339 Q416.07 938.874 416.2672 934.93 Z" fill="#b4683a"/><path d="M418.1406 934.437 Q421 933.1552 423.8594 934.437 Q424.1552 939.367 421 940.846 Q417.8448 939.367 418.1406 934.437 Z" fill="url(#gface)"/></svg><div style="position:absolute;left:451.4px;top:932.53px;font-size:13.1px;line-height:15.065px;color:#333;white-space:nowrap;">NIKOLAY (MAIN)</div><svg style="position:absolute;left:588px;top:927px;overflow:visible;" width="24" height="24" viewBox="588 927 24 24"><rect x="591.5" y="930.5" width="17" height="17" fill="#fff" stroke="#4060a0" stroke-width="1"/><rect x="592" y="931" width="16" height="4" fill="#e05040"/><text x="600" y="946" font-family="Liberation Sans" font-weight="bold" font-size="10" fill="#304880" text-anchor="middle">31</text></svg><div style="position:absolute;left:630.8px;top:931.7px;font-size:14.0px;line-height:16.1px;color:#333;white-space:nowrap;">23.08.2024</div><div style="position:absolute;left:762px;top:931.61px;font-size:14.1px;line-height:16.215px;color:#333;white-space:nowrap;">09:32:43:749</div><svg style="position:absolute;left:1508px;top:932px;overflow:visible;" width="16" height="16" viewBox="1508 932 16 16"><rect x="1519" y="936" width="2" height="2" fill="#707070"/><rect x="1519" y="940" width="2" height="2" fill="#707070"/><rect x="1515" y="940" width="2" height="2" fill="#707070"/><rect x="1519" y="944" width="2" height="2" fill="#707070"/><rect x="1515" y="944" width="2" height="2" fill="#707070"/><rect x="1511" y="944" width="2" height="2" fill="#707070"/></svg><div style="position:absolute;left:0;top:0;width:1545px;height:973px;box-sizing:border-box;border:1px solid #8e8e8e;pointer-events:none"></div>
</body></html>
